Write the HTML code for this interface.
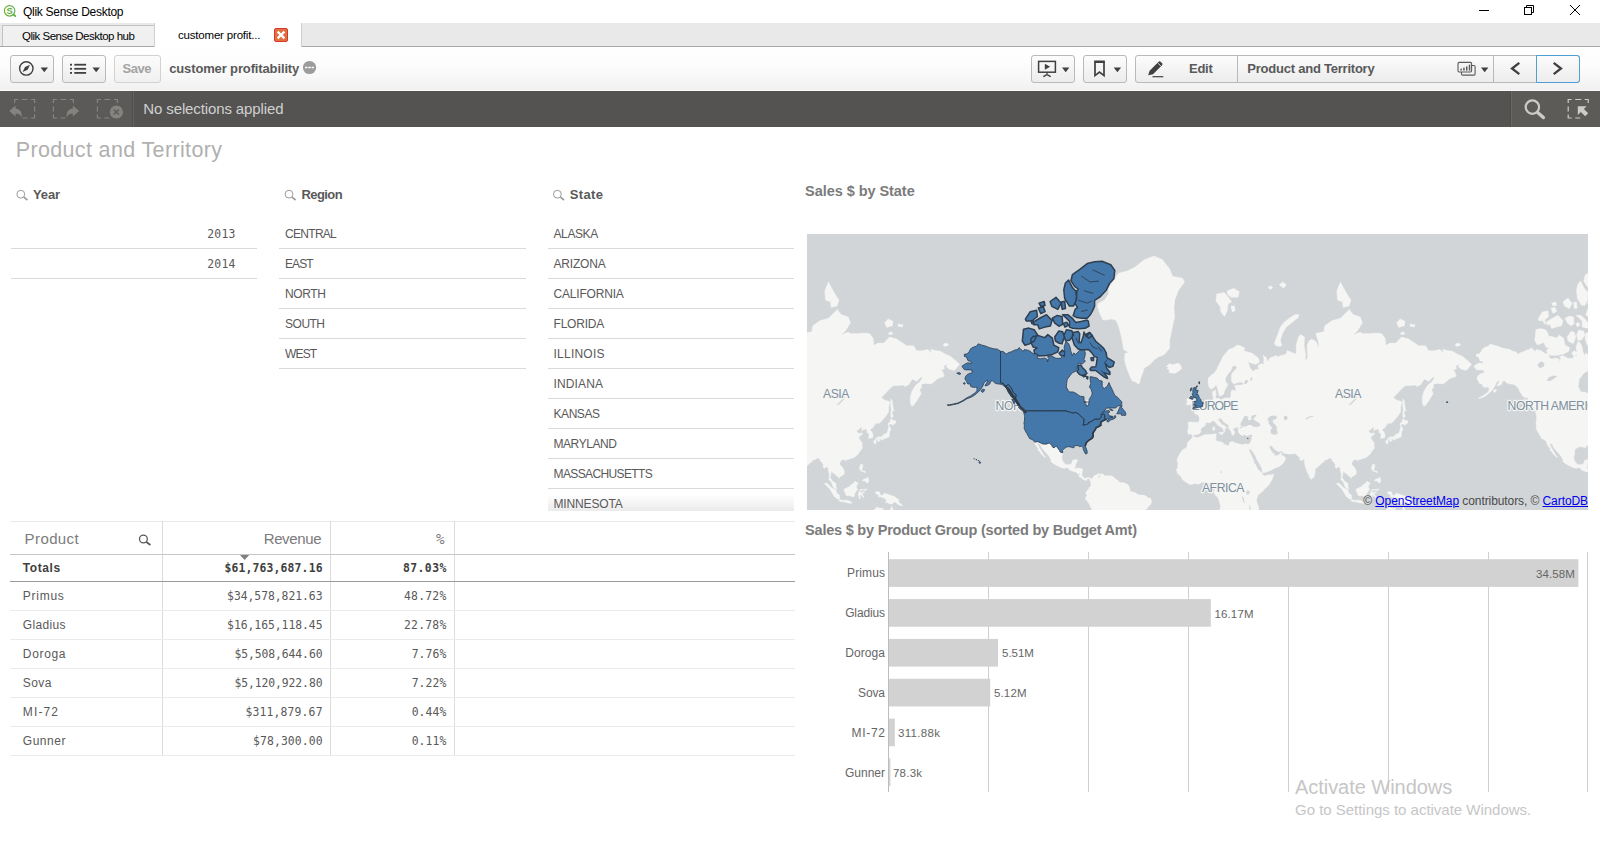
<!DOCTYPE html>
<html lang="en"><head><meta charset="utf-8"><title>Qlik Sense Desktop</title>
<style>
html,body{margin:0;padding:0;}
body{width:1600px;height:859px;position:relative;overflow:hidden;background:#fff;font-family:"Liberation Sans",sans-serif;}
.a{position:absolute;box-sizing:border-box;}
.t{position:absolute;white-space:nowrap;line-height:1em;font-family:"Liberation Sans",sans-serif;}
#tabstrip{left:0;top:23px;width:1600px;height:24px;background:#e9e9e9;border-bottom:1px solid #a9a9a9;}
#tab1{left:2px;top:25px;width:153px;height:21px;background:#f0f0f0;border:1px solid #c3c3c3;border-bottom:none;}
#tab2{left:154px;top:23px;width:148px;height:24px;background:#fff;border-left:1px solid #d0d0d0;border-right:1px solid #d0d0d0;}
#tabx{left:274px;top:28px;width:14px;height:14px;background:#e0703f;border:1px solid #d9362c;border-radius:2px;}
#toolbar{left:0;top:47px;width:1600px;height:44px;background:linear-gradient(#ffffff 0%,#fdfdfd 40%,#f1f1f1 100%);border-bottom:1px solid #f9f9f9;}
.btn{top:55px;height:28px;border:1px solid #b9b9b9;border-radius:3px;background:linear-gradient(#fcfcfc,#ececec);}
.btn.dis{border-color:#d2d2d2;background:linear-gradient(#fbfbfb,#f0f0f0);}
.sep{top:55px;width:1px;height:28px;background:#b9b9b9;}
#nextb{left:1536px;top:55px;width:44px;height:28px;border:1px solid #4d9fd6;border-radius:0 3px 3px 0;}
#selbar{left:0;top:91px;width:1600px;height:36px;background:#545351;}
#selL{left:0;top:91px;width:134px;height:36px;background:#5b5a58;border-right:1px solid #656462;}
#selR{left:1510px;top:91px;width:90px;height:36px;background:#5c5b58;border-left:1px solid #4b4a48;}
.hl{height:1px;background:#dadada;}
.vl{width:1px;background:#dcdcdc;}
#minn{left:548px;top:489px;width:246px;height:22px;background:linear-gradient(#ffffff 25%,#ebebeb 100%);}
.bar{background:#d2d2d2;height:27.5px;left:889px;}
.grid{width:1px;top:552px;height:240px;background:#cfcfcf;}
#map{left:807px;top:234px;width:781px;height:276px;background:#d1d5d8;overflow:hidden;}
#icons{left:0;top:0;}
a{color:#0000ee;}
.attr{position:absolute;right:0;bottom:0;font-size:12px;line-height:14px;color:#4a4a4a;white-space:nowrap;padding:0 0 2px 0;letter-spacing:-0.08px;}
.lk{color:#0000ee;text-decoration:underline;}

#selL2{left:132px;top:91px;width:1px;height:36px;background:#4e4d4c;}
#selR2{left:1511px;top:91px;width:1px;height:36px;background:#696866;}

</style></head>
<body>
<div class="a" id="tabstrip"></div>
<div class="a" id="tab1"></div>
<div class="a" id="tab2"></div>
<div class="a" id="tabx"></div>
<div class="a" id="toolbar"></div>
<div class="a btn" style="left:10px;width:44px;"></div>
<div class="a btn" style="left:62px;width:44px;"></div>
<div class="a btn dis" style="left:114px;width:47px;"></div>
<div class="a btn" style="left:1031px;width:44px;"></div>
<div class="a btn" style="left:1083px;width:44px;"></div>
<div class="a btn" style="left:1135px;width:445px;"></div>
<div class="a sep" style="left:1237px;"></div>
<div class="a sep" style="left:1493px;"></div>
<div class="a" id="nextb"></div>
<div class="a" id="selbar"></div>
<div class="a" id="selL"></div>
<div class="a" id="selR"></div>
<div class="a" id="selL2"></div>
<div class="a" id="selR2"></div>

<!-- filter pane lines -->
<div class="a hl" style="left:11px;width:246px;top:248px;"></div>
<div class="a hl" style="left:11px;width:246px;top:278px;"></div>
<div class="a hl" style="left:279px;width:247px;top:248px;"></div>
<div class="a hl" style="left:279px;width:247px;top:278px;"></div>
<div class="a hl" style="left:279px;width:247px;top:308px;"></div>
<div class="a hl" style="left:279px;width:247px;top:338px;"></div>
<div class="a hl" style="left:279px;width:247px;top:368px;"></div>
<div class="a hl" style="left:548px;width:246px;top:248px;"></div>
<div class="a hl" style="left:548px;width:246px;top:278px;"></div>
<div class="a hl" style="left:548px;width:246px;top:308px;"></div>
<div class="a hl" style="left:548px;width:246px;top:338px;"></div>
<div class="a hl" style="left:548px;width:246px;top:368px;"></div>
<div class="a hl" style="left:548px;width:246px;top:398px;"></div>
<div class="a hl" style="left:548px;width:246px;top:428px;"></div>
<div class="a hl" style="left:548px;width:246px;top:458px;"></div>
<div class="a hl" style="left:548px;width:246px;top:488px;"></div>
<div class="a" id="minn"></div>

<!-- table lines -->
<div class="a hl" style="left:10px;width:785px;top:521px;background:#ebebeb;"></div>
<div class="a vl" style="left:162px;top:521px;height:234px;"></div>
<div class="a vl" style="left:330px;top:521px;height:234px;"></div>
<div class="a vl" style="left:454px;top:521px;height:234px;"></div>
<div class="a hl" style="left:10px;width:785px;top:554px;background:#c6c6c6;"></div>
<div class="a hl" style="left:10px;width:785px;top:581px;background:#9b9b9b;"></div>
<div class="a hl" style="left:10px;width:785px;top:610px;background:#ebebeb;"></div>
<div class="a hl" style="left:10px;width:785px;top:639px;background:#ebebeb;"></div>
<div class="a hl" style="left:10px;width:785px;top:668px;background:#ebebeb;"></div>
<div class="a hl" style="left:10px;width:785px;top:697px;background:#ebebeb;"></div>
<div class="a hl" style="left:10px;width:785px;top:726px;background:#ebebeb;"></div>
<div class="a hl" style="left:10px;width:785px;top:755px;background:#ebebeb;"></div>

<!-- map -->
<div class="a" id="map"><svg width="781" height="276" viewBox="807 234 781 276" style="position:absolute;left:0;top:0;display:block">
<rect x="807" y="234" width="781" height="276" fill="#d1d5d8"/>
<path fill="#f5f5f3" stroke="#f5f5f3" stroke-width="0.4" stroke-linejoin="round" d="M676.3 434.3L675.5 431.2L676.5 427.0L675.8 423.1L677.6 421.8L681.2 422.2L684.0 422.2L686.4 422.4L687.3 420.0L687.3 417.2L685.9 414.9L682.6 413.4L682.2 412.1L684.7 411.3L686.7 411.5L686.6 409.3L689.1 409.7L691.1 408.2L691.4 406.6L693.7 405.5L695.1 403.7L695.8 401.8L698.7 400.6L701.1 399.9L701.2 396.9L700.5 394.4L700.7 391.6L704.1 390.0L703.6 393.2L704.4 394.4L703.2 396.9L704.6 398.4L706.8 398.4L709.2 399.6L712.5 398.2L715.5 397.7L717.3 398.4L718.9 396.2L718.9 392.4L719.6 390.5L721.1 390.0L723.6 391.3L723.7 388.1L722.4 385.9L724.6 385.1L728.8 385.1L732.0 384.0L729.5 382.0L726.0 382.5L721.7 384.0L719.6 381.4L719.3 377.8L719.6 374.1L723.8 368.9L725.1 368.2L723.4 365.5L720.3 366.5L719.3 369.9L716.0 374.1L713.6 377.8L713.5 381.7L715.9 384.3L715.0 386.5L712.6 390.5L711.8 393.9L709.3 395.7L707.3 395.9L706.8 393.7L705.8 390.0L704.9 386.5L704.1 385.1L702.5 387.0L699.2 389.2L697.0 387.0L696.1 382.5L696.1 378.1L699.0 375.4L702.5 372.8L704.6 369.6L706.8 364.8L709.3 360.1L711.0 356.4L714.3 352.4L716.7 349.6L721.0 347.9L725.6 344.9L729.5 346.2L733.1 348.3L731.7 350.8L735.9 352.0L740.2 353.2L746.6 358.3L747.6 362.0L743.8 364.5L738.5 363.0L735.9 361.6L738.2 368.2L741.3 371.5L743.0 369.6L746.6 369.6L745.9 365.5L749.4 363.4L751.6 364.8L751.9 358.3L750.9 355.2L754.4 357.5L755.1 361.6L758.7 357.5L764.4 355.6L765.8 356.8L770.1 355.2L774.3 354.0L775.0 350.4L780.0 352.4L784.0 354.0L784.3 351.6L784.1 345.3L786.4 337.1L788.6 334.6L792.5 337.1L792.1 345.3L793.8 355.6L792.8 361.2L795.7 357.5L795.0 345.3L797.1 340.8L799.9 339.0L804.2 341.8L807.0 348.3L806.3 341.8L803.8 333.6L812.0 331.6L812.7 325.8L819.8 320.7L828.4 318.3L837.3 309.5L841.2 314.6L848.3 317.1L850.4 323.0L845.4 331.1L841.2 335.1L848.3 332.1L850.4 333.6L856.8 333.6L864.6 333.1L869.6 333.6L873.2 338.5L873.9 345.3L878.2 343.1L883.8 343.1L888.1 338.5L889.5 337.1L896.6 339.0L902.3 342.7L906.6 345.8L913.7 345.8L916.6 350.8L922.2 350.8L927.9 349.6L931.5 353.2L930.8 349.2L935.0 350.4L940.7 351.2L945.0 354.0L950.7 356.4L956.4 361.2L959.6 364.5L955.7 368.9L954.2 370.6L948.6 368.9L946.4 366.5L947.1 363.8L943.6 366.2L945.0 368.2L942.9 369.6L941.4 369.2L944.0 374.7L944.3 376.3L937.9 378.4L933.6 382.3L931.2 384.0L925.8 383.4L921.5 384.0L921.1 387.9L919.7 389.7L921.1 393.9L919.1 396.9L916.6 401.1L914.3 404.4L911.9 406.6L910.4 403.0L910.3 396.9L912.0 391.1L915.8 385.1L919.4 382.3L921.8 379.3L922.2 376.6L918.7 379.0L917.0 381.4L912.3 379.0L908.7 384.8L904.5 386.5L903.5 385.1L900.2 385.4L893.1 385.7L888.8 389.7L885.3 393.4L881.3 397.4L884.3 399.9L888.5 401.3L890.0 401.8L888.8 406.4L888.5 411.9L886.0 416.1L882.4 420.2L878.9 423.5L876.6 422.9L874.9 424.5L873.5 426.2L873.5 427.3L870.3 429.4L870.3 430.3L871.6 431.6L873.0 434.3L873.0 436.9L872.6 437.6L870.3 438.3L868.6 438.7L868.9 436.1L869.1 433.4L867.1 432.9L866.8 429.8L865.9 429.0L863.2 429.8L861.5 431.0L862.2 427.7L861.1 427.2L859.0 429.2L856.5 430.7L858.0 432.7L858.2 433.8L860.7 432.9L863.2 433.6L860.1 436.1L858.7 437.8L860.1 439.9L862.2 443.3L862.4 444.8L861.1 445.6L862.5 446.4L861.9 449.0L859.7 451.6L858.7 453.5L856.8 455.2L855.0 456.9L851.4 458.5L848.3 459.4L846.0 460.0L845.7 461.5L845.0 459.7L843.0 459.5L840.9 460.7L839.5 463.5L840.6 465.6L842.9 467.8L844.3 471.2L844.4 473.8L842.3 475.8L840.9 476.1L838.8 478.6L838.2 476.7L836.2 475.8L835.1 474.1L832.6 472.8L832.5 471.6L831.2 471.9L830.9 474.5L830.1 477.4L831.6 479.6L832.6 481.2L834.5 482.2L836.1 484.2L836.1 486.7L837.2 489.0L836.1 489.0L833.1 486.9L831.8 483.6L830.7 481.2L828.8 479.6L829.2 476.7L829.2 473.8L828.4 470.9L828.0 467.9L826.7 466.8L824.5 468.2L823.1 467.6L823.4 465.0L822.1 462.7L820.3 460.7L819.6 458.5L817.7 458.1L815.3 459.4L812.7 460.0L812.4 461.5L810.6 462.6L808.5 464.5L806.0 466.8L804.5 467.9L803.1 469.0L803.2 472.1L802.5 474.1L802.5 476.3L801.4 477.7L800.2 478.4L799.2 479.4L797.8 478.1L796.8 475.0L795.4 472.4L794.2 469.4L793.2 466.5L792.5 463.5L792.4 460.4L792.1 458.6L790.0 460.7L789.1 460.7L787.1 458.5L788.6 457.4L786.0 456.4L784.3 454.6L783.6 453.6L780.7 453.9L777.2 454.1L774.3 453.8L771.5 453.3L770.1 451.4L769.1 450.9L766.5 451.7L763.7 450.3L761.5 448.2L761.2 447.9L760.1 446.1L758.4 445.7L757.3 446.2L758.0 448.7L759.7 451.4L760.4 452.4L761.2 454.6L761.8 452.5L762.4 454.3L762.2 455.4L764.4 455.7L766.5 455.2L768.6 452.7L769.2 452.2L769.5 455.0L772.3 456.4L774.0 458.1L772.2 461.4L771.1 463.5L769.1 465.1L767.2 466.5L763.2 467.9L758.7 470.4L753.0 472.6L750.9 472.8L750.2 470.9L749.7 467.9L747.6 464.2L744.8 459.7L743.5 456.1L741.3 452.7L738.8 449.5L738.8 447.1L737.8 449.7L736.2 448.7L735.4 446.4L734.9 444.3L737.6 444.1L738.6 441.6L739.5 439.7L739.9 436.9L740.5 435.0L738.2 434.6L735.2 435.9L732.7 434.6L730.5 435.5L727.8 434.3L726.4 432.0L726.1 429.8L726.3 428.8L726.3 428.3L726.0 427.2L723.7 427.2L723.1 428.5L721.6 427.9L721.1 429.8L722.1 430.7L723.1 432.3L723.1 433.0L722.0 432.7L721.9 435.2L720.9 435.4L719.9 434.6L719.0 432.9L719.6 432.0L718.4 430.9L717.4 429.4L716.6 427.7L716.6 425.4L715.3 424.3L713.2 423.1L711.0 421.2L709.6 418.6L708.3 419.2L708.5 417.8L706.5 418.6L706.6 420.8L708.3 422.2L710.3 425.1L712.0 425.3L715.3 428.6L713.2 427.9L712.6 429.4L713.3 430.7L711.9 432.7L711.3 432.6L711.8 431.0L710.8 428.8L709.2 427.3L706.8 426.0L704.8 424.3L703.5 422.2L701.7 420.4L699.7 421.6L697.8 422.9L695.4 422.4L693.4 423.1L693.6 425.1L692.1 426.4L690.0 427.3L688.6 429.8L689.1 431.2L687.9 433.2L685.9 434.6L682.7 434.8L681.0 436.1L680.0 435.0L678.8 433.9ZM825.5 300.3L824.8 290.8L828.4 282.0L834.1 292.5L839.0 300.3L836.9 306.0L831.2 307.4L830.5 301.8ZM884.6 323.0L888.1 318.9L893.1 321.3L892.4 325.8L886.7 327.4ZM898.1 324.1L903.0 324.7L902.3 326.9L898.1 326.3ZM888.1 333.6L891.0 331.6L893.1 334.1L889.5 334.6ZM942.9 345.3L945.0 343.1L948.6 344.0L947.8 345.8L944.3 346.2ZM891.0 398.7L892.4 401.1L892.8 405.3L893.5 410.2L894.8 410.8L892.4 410.8L892.1 414.0L893.1 415.5L892.9 417.2L891.0 417.2L890.8 414.0L891.1 409.7L890.7 405.3L890.8 401.1ZM888.1 426.0L888.5 422.7L890.0 422.5L890.7 418.4L893.1 420.6L895.6 420.8L896.1 422.5L893.1 425.1L890.2 423.9L889.2 424.1L889.5 425.6ZM889.4 426.0L890.2 427.9L891.0 429.8L889.5 432.0L889.4 434.5L889.2 436.6L887.8 437.8L887.5 437.3L886.4 438.3L885.6 438.5L883.8 438.5L883.6 439.0L882.1 440.4L881.1 439.0L881.6 438.5L878.2 439.0L877.0 439.7L875.3 439.5L875.2 439.5L876.0 438.5L877.7 437.1L880.3 436.8L882.1 436.8L883.4 434.6L884.3 433.4L884.3 434.5L886.0 433.8L887.3 432.1L888.1 429.2L888.1 427.7ZM875.2 439.7L876.3 440.7L876.0 443.1L874.9 444.4L874.2 442.8L873.5 441.2L874.3 440.2ZM877.4 439.7L880.4 439.2L879.9 440.7L878.2 441.6L877.3 440.6ZM860.5 464.2L862.8 464.4L862.8 467.2L861.8 469.4L862.5 470.7L865.2 471.2L865.4 472.9L863.9 471.9L861.8 471.3L860.5 470.6L860.0 469.7L859.4 467.6L860.2 465.7ZM867.5 477.0L868.9 479.6L868.5 481.7L867.5 483.0L865.4 481.7L865.4 480.6L862.5 481.2L863.2 479.6L864.6 478.7L866.1 478.7ZM844.0 488.9L845.9 488.6L847.3 487.4L849.7 486.4L851.1 484.6L852.6 483.9L854.3 482.2L855.1 481.0L856.4 482.0L858.5 483.5L856.8 484.9L856.4 486.7L856.8 488.3L858.2 489.6L856.5 490.1L856.1 492.1L854.7 493.1L854.4 495.7L854.0 496.7L852.0 496.7L849.7 495.6L847.9 496.0L845.7 495.1L845.4 492.8L844.0 491.0ZM824.5 483.0L827.7 483.6L829.4 485.6L831.8 487.9L833.6 488.6L836.2 490.3L836.6 492.4L837.6 493.8L839.8 495.3L839.6 499.3L837.8 499.3L834.5 496.7L831.8 492.4L829.5 488.6L827.2 486.4L824.7 483.9ZM838.6 500.7L840.9 499.5L843.3 500.6L846.6 500.1L849.3 500.8L849.4 501.3L851.7 502.1L851.7 503.4L848.3 503.0L844.0 502.1L840.3 501.6ZM859.0 498.8L860.2 498.8L860.1 495.3L861.1 494.8L863.1 497.4L863.6 497.4L863.9 496.7L862.1 493.8L861.5 493.7L864.5 492.4L864.4 491.9L861.8 492.3L860.0 492.3L860.0 490.4L861.1 490.3L863.9 490.3L866.1 490.4L867.1 488.9L865.8 489.3L863.2 489.6L860.9 489.2L859.7 490.0L859.4 491.1L858.7 492.7L858.0 495.0L859.0 496.0ZM875.3 492.1L877.4 491.6L879.6 492.1L880.3 494.6L881.7 495.7L883.8 493.8L885.3 493.3L889.5 494.7L894.5 496.4L896.4 498.1L898.8 499.5L899.2 500.6L898.1 500.7L899.8 503.1L903.0 505.7L900.9 505.7L898.1 504.6L895.2 502.1L893.1 502.8L892.4 504.1L889.5 504.0L887.4 502.6L885.3 502.8L886.4 500.7L885.3 498.8L881.7 497.3L878.9 496.7L877.9 496.7L879.2 495.3L877.9 495.0L876.7 494.1L875.3 493.0ZM873.2 520.0L873.6 512.3L874.2 509.6L875.3 508.5L877.6 507.0L878.9 507.9L881.0 508.2L883.6 508.5L882.4 510.4L881.7 512.3L883.8 513.8L887.4 516.3L889.2 516.3L890.4 512.6L890.5 508.9L891.7 506.3L893.1 509.4L893.2 511.6L895.6 512.6L896.6 517.8L897.4 520.0ZM1034.5 442.1L1035.2 444.6L1036.3 446.2L1037.7 447.9L1038.6 449.5L1037.4 449.8L1039.6 451.6L1041.4 454.3L1043.8 456.6L1044.7 457.5L1045.4 456.8L1044.1 455.5L1042.7 453.0L1041.0 450.3L1039.6 447.9L1037.9 444.6L1037.7 443.3L1040.3 444.3L1041.0 446.4L1043.1 449.5L1045.3 451.9L1047.4 454.3L1049.5 456.9L1051.0 459.7L1051.0 461.4L1052.7 463.3L1055.9 465.1L1058.8 466.5L1061.6 467.8L1064.5 468.4L1066.6 467.6L1068.7 468.8L1069.9 470.2L1071.6 471.0L1073.7 471.8L1076.1 472.1L1076.8 473.1L1078.7 474.7L1079.1 476.7L1080.5 477.3L1082.1 478.7L1083.1 479.4L1085.1 480.2L1086.7 480.6L1087.2 479.2L1087.9 478.3L1089.5 479.2L1090.2 480.7L1091.1 478.9L1090.9 478.6L1089.4 477.6L1087.8 477.3L1085.8 478.4L1084.1 478.1L1083.0 476.7L1082.1 475.4L1082.0 473.1L1082.5 470.9L1082.7 469.4L1080.8 468.2L1078.7 468.1L1076.6 468.2L1075.0 468.2L1074.6 468.1L1075.4 466.5L1075.7 464.4L1076.6 462.7L1077.6 460.1L1075.8 459.5L1072.6 460.3L1072.0 462.4L1070.9 464.2L1068.7 464.4L1066.6 464.7L1064.8 463.8L1064.2 463.0L1062.8 460.9L1062.0 458.9L1061.9 456.6L1062.5 454.3L1062.8 452.8L1060.1 452.0L1059.5 450.3L1058.4 449.0L1056.8 446.6L1055.4 446.6L1054.2 447.9L1052.4 446.9L1051.8 445.3L1049.5 443.3L1047.1 443.3L1047.1 444.1L1043.1 444.1L1037.9 441.7ZM1090.2 480.7L1090.9 482.5L1090.8 485.3L1091.2 485.6L1089.1 487.4L1088.9 489.0L1087.2 489.9L1087.1 491.0L1085.9 492.4L1085.9 494.1L1087.2 494.7L1086.8 495.8L1085.4 497.5L1085.7 499.5L1087.5 501.3L1089.2 503.9L1091.2 508.2L1092.5 510.8L1094.3 513.3L1094.3 520.0L1145.5 520.0L1145.5 513.3L1145.5 509.6L1146.2 509.5L1148.4 506.7L1150.9 503.9L1151.5 501.3L1150.8 498.4L1148.4 497.8L1146.2 496.3L1144.1 495.0L1141.3 495.0L1138.0 494.6L1135.6 492.7L1132.7 492.0L1129.9 491.0L1129.9 488.4L1128.5 485.3L1127.0 484.0L1124.2 482.7L1119.9 482.5L1117.8 480.6L1115.7 478.9L1113.5 477.0L1112.1 476.0L1110.0 475.8L1107.1 475.8L1104.3 475.8L1103.9 474.8L1101.4 473.5L1099.3 475.4L1099.6 473.2L1099.0 473.2L1097.2 474.5L1095.0 475.3L1093.6 476.1L1092.9 477.7L1091.8 478.7L1091.1 478.9ZM1138.6 384.3L1135.6 382.0L1132.0 380.8L1129.9 376.3L1127.8 370.9L1125.6 364.8L1124.6 359.4L1124.9 353.6L1128.5 352.4L1123.5 349.6L1123.1 346.2L1122.1 340.8L1120.6 333.6L1118.5 325.8L1115.7 320.1L1111.4 318.9L1106.4 320.1L1102.9 320.1L1100.0 314.0L1097.2 306.0L1098.6 303.2L1104.3 300.3L1108.6 294.1L1108.6 288.3L1112.8 282.0L1118.5 273.2L1127.0 271.1L1135.6 266.7L1144.1 259.7L1154.1 256.0L1162.6 259.7L1169.7 268.9L1172.6 276.2L1182.5 278.2L1184.6 282.0L1178.2 290.8L1174.7 300.3L1174.0 308.8L1174.7 317.1L1172.6 325.8L1171.1 333.6L1169.7 339.9L1169.7 345.3L1169.7 348.3L1166.9 351.6L1164.0 354.8L1158.3 357.1L1154.1 360.1L1150.5 364.1L1147.7 365.9L1144.1 368.2L1142.7 373.2L1140.6 378.4L1139.8 382.3ZM1166.2 366.5L1169.7 363.4L1172.6 364.8L1175.4 364.1L1178.2 363.0L1180.4 364.8L1181.8 368.2L1179.7 370.6L1175.4 373.2L1171.8 373.2L1168.7 372.2L1169.7 370.2L1166.9 368.6L1169.0 367.2ZM1192.5 403.7L1189.6 404.8L1186.8 405.0L1186.2 403.7L1187.5 402.5L1186.8 400.6L1186.8 398.9L1188.9 398.4L1188.8 396.9L1190.5 396.2L1192.3 396.4L1193.2 398.2L1192.3 400.1L1192.3 402.0ZM1188.3 434.3L1187.5 431.2L1188.5 427.0L1187.8 423.1L1189.6 421.8L1193.2 422.2L1196.0 422.2L1198.4 422.4L1199.3 420.0L1199.3 417.2L1197.9 414.9L1194.6 413.4L1194.2 412.1L1196.7 411.3L1198.7 411.5L1198.6 409.3L1201.1 409.7L1203.1 408.2L1203.4 406.6L1205.7 405.5L1207.1 403.7L1207.8 401.8L1210.7 400.6L1213.1 399.9L1213.2 396.9L1212.5 394.4L1212.7 391.6L1216.1 390.0L1215.6 393.2L1216.4 394.4L1215.2 396.9L1216.6 398.4L1218.8 398.4L1221.2 399.6L1224.5 398.2L1227.5 397.7L1229.3 398.4L1230.9 396.2L1230.9 392.4L1231.6 390.5L1233.1 390.0L1235.6 391.3L1235.7 388.1L1234.4 385.9L1236.6 385.1L1240.8 385.1L1244.0 384.0L1241.5 382.0L1238.0 382.5L1233.7 384.0L1231.6 381.4L1231.3 377.8L1231.6 374.1L1235.8 368.9L1237.1 368.2L1235.4 365.5L1232.3 366.5L1231.3 369.9L1228.0 374.1L1225.6 377.8L1225.5 381.7L1227.9 384.3L1227.0 386.5L1224.6 390.5L1223.8 393.9L1221.3 395.7L1219.3 395.9L1218.8 393.7L1217.8 390.0L1216.9 386.5L1216.1 385.1L1214.5 387.0L1211.2 389.2L1209.0 387.0L1208.1 382.5L1208.1 378.1L1211.0 375.4L1214.5 372.8L1216.6 369.6L1218.8 364.8L1221.3 360.1L1223.0 356.4L1226.3 352.4L1228.7 349.6L1233.0 347.9L1237.6 344.9L1241.5 346.2L1245.1 348.3L1243.7 350.8L1247.9 352.0L1252.2 353.2L1258.6 358.3L1259.6 362.0L1255.8 364.5L1250.5 363.0L1247.9 361.6L1250.2 368.2L1253.3 371.5L1255.0 369.6L1258.6 369.6L1257.9 365.5L1261.4 363.4L1263.6 364.8L1263.9 358.3L1262.9 355.2L1266.4 357.5L1267.1 361.6L1270.7 357.5L1276.4 355.6L1277.8 356.8L1282.1 355.2L1286.3 354.0L1287.0 350.4L1292.0 352.4L1296.0 354.0L1296.3 351.6L1296.1 345.3L1298.4 337.1L1300.6 334.6L1304.5 337.1L1304.1 345.3L1305.8 355.6L1304.8 361.2L1307.7 357.5L1307.0 345.3L1309.1 340.8L1311.9 339.0L1316.2 341.8L1319.0 348.3L1318.3 341.8L1315.8 333.6L1324.0 331.6L1324.7 325.8L1331.8 320.7L1340.4 318.3L1349.3 309.5L1353.2 314.6L1360.3 317.1L1362.4 323.0L1357.4 331.1L1353.2 335.1L1360.3 332.1L1362.4 333.6L1368.8 333.6L1376.6 333.1L1381.6 333.6L1385.2 338.5L1385.9 345.3L1390.2 343.1L1395.8 343.1L1400.1 338.5L1401.5 337.1L1408.6 339.0L1414.3 342.7L1418.6 345.8L1425.7 345.8L1428.6 350.8L1434.2 350.8L1439.9 349.6L1443.5 353.2L1442.8 349.2L1447.0 350.4L1452.7 351.2L1457.0 354.0L1462.7 356.4L1468.4 361.2L1471.6 364.5L1467.7 368.9L1466.2 370.6L1460.6 368.9L1458.4 366.5L1459.1 363.8L1455.6 366.2L1457.0 368.2L1454.9 369.6L1453.4 369.2L1456.0 374.7L1456.3 376.3L1449.9 378.4L1445.6 382.3L1443.2 384.0L1437.8 383.4L1433.5 384.0L1433.1 387.9L1431.7 389.7L1433.1 393.9L1431.1 396.9L1428.6 401.1L1426.3 404.4L1423.9 406.6L1422.4 403.0L1422.3 396.9L1424.0 391.1L1427.8 385.1L1431.4 382.3L1433.8 379.3L1434.2 376.6L1430.7 379.0L1429.0 381.4L1424.3 379.0L1420.7 384.8L1416.5 386.5L1415.5 385.1L1412.2 385.4L1405.1 385.7L1400.8 389.7L1397.3 393.4L1393.3 397.4L1396.3 399.9L1400.5 401.3L1402.0 401.8L1400.8 406.4L1400.5 411.9L1398.0 416.1L1394.4 420.2L1390.9 423.5L1388.6 422.9L1386.9 424.5L1385.5 426.2L1385.5 427.3L1382.3 429.4L1382.3 430.3L1383.6 431.6L1385.0 434.3L1385.0 436.9L1384.6 437.6L1382.3 438.3L1380.6 438.7L1380.9 436.1L1381.1 433.4L1379.1 432.9L1378.8 429.8L1377.9 429.0L1375.2 429.8L1373.5 431.0L1374.2 427.7L1373.1 427.2L1371.0 429.2L1368.5 430.7L1370.0 432.7L1370.2 433.8L1372.7 432.9L1375.2 433.6L1372.1 436.1L1370.7 437.8L1372.1 439.9L1374.2 443.3L1374.4 444.8L1373.1 445.6L1374.5 446.4L1373.9 449.0L1371.7 451.6L1370.7 453.5L1368.8 455.2L1367.0 456.9L1363.4 458.5L1360.3 459.4L1358.0 460.0L1357.7 461.5L1357.0 459.7L1355.0 459.5L1352.9 460.7L1351.5 463.5L1352.6 465.6L1354.9 467.8L1356.3 471.2L1356.4 473.8L1354.3 475.8L1352.9 476.1L1350.8 478.6L1350.2 476.7L1348.2 475.8L1347.1 474.1L1344.6 472.8L1344.5 471.6L1343.2 471.9L1342.9 474.5L1342.1 477.4L1343.6 479.6L1344.6 481.2L1346.5 482.2L1348.1 484.2L1348.1 486.7L1349.2 489.0L1348.1 489.0L1345.1 486.9L1343.8 483.6L1342.7 481.2L1340.8 479.6L1341.2 476.7L1341.2 473.8L1340.4 470.9L1340.0 467.9L1338.7 466.8L1336.5 468.2L1335.1 467.6L1335.4 465.0L1334.1 462.7L1332.3 460.7L1331.6 458.5L1329.7 458.1L1327.3 459.4L1324.7 460.0L1324.4 461.5L1322.6 462.6L1320.5 464.5L1318.0 466.8L1316.5 467.9L1315.1 469.0L1315.2 472.1L1314.5 474.1L1314.5 476.3L1313.4 477.7L1312.2 478.4L1311.2 479.4L1309.8 478.1L1308.8 475.0L1307.4 472.4L1306.2 469.4L1305.2 466.5L1304.5 463.5L1304.4 460.4L1304.1 458.6L1302.0 460.7L1301.1 460.7L1299.1 458.5L1300.6 457.4L1298.0 456.4L1296.3 454.6L1295.6 453.6L1292.7 453.9L1289.2 454.1L1286.3 453.8L1283.5 453.3L1282.1 451.4L1281.1 450.9L1278.5 451.7L1275.7 450.3L1273.5 448.2L1273.2 447.9L1272.1 446.1L1270.4 445.7L1269.3 446.2L1270.0 448.7L1271.7 451.4L1272.4 452.4L1273.2 454.6L1273.8 452.5L1274.4 454.3L1274.2 455.4L1276.4 455.7L1278.5 455.2L1280.6 452.7L1281.2 452.2L1281.5 455.0L1284.3 456.4L1286.0 458.1L1284.2 461.4L1283.1 463.5L1281.1 465.1L1279.2 466.5L1275.2 467.9L1270.7 470.4L1265.0 472.6L1262.9 472.8L1262.2 470.9L1261.7 467.9L1259.6 464.2L1256.8 459.7L1255.5 456.1L1253.3 452.7L1250.8 449.5L1250.8 447.1L1249.8 449.7L1248.2 448.7L1247.4 446.4L1246.9 444.3L1249.6 444.1L1250.6 441.6L1251.5 439.7L1251.9 436.9L1252.5 435.0L1250.2 434.6L1247.2 435.9L1244.7 434.6L1242.5 435.5L1239.8 434.3L1238.4 432.0L1238.1 429.8L1238.3 428.8L1238.3 428.3L1238.0 427.2L1235.7 427.2L1235.1 428.5L1233.6 427.9L1233.1 429.8L1234.1 430.7L1235.1 432.3L1235.1 433.0L1234.0 432.7L1233.9 435.2L1232.9 435.4L1231.9 434.6L1231.0 432.9L1231.6 432.0L1230.4 430.9L1229.4 429.4L1228.6 427.7L1228.6 425.4L1227.3 424.3L1225.2 423.1L1223.0 421.2L1221.6 418.6L1220.3 419.2L1220.5 417.8L1218.5 418.6L1218.6 420.8L1220.3 422.2L1222.3 425.1L1224.0 425.3L1227.3 428.6L1225.2 427.9L1224.6 429.4L1225.3 430.7L1223.9 432.7L1223.3 432.6L1223.8 431.0L1222.8 428.8L1221.2 427.3L1218.8 426.0L1216.8 424.3L1215.5 422.2L1213.7 420.4L1211.7 421.6L1209.8 422.9L1207.4 422.4L1205.4 423.1L1205.6 425.1L1204.1 426.4L1202.0 427.3L1200.6 429.8L1201.1 431.2L1199.9 433.2L1197.9 434.6L1194.7 434.8L1193.0 436.1L1192.0 435.0L1190.8 433.9ZM1247.4 446.4L1249.1 450.3L1251.5 455.8L1253.9 460.4L1253.9 462.6L1255.9 465.0L1257.2 468.5L1260.0 471.2L1262.4 473.1L1262.6 474.4L1264.3 476.1L1267.8 475.0L1270.7 474.8L1273.8 474.0L1273.2 476.7L1271.8 479.9L1269.3 484.6L1266.4 487.6L1265.4 488.2L1262.9 491.0L1260.2 493.4L1258.2 495.0L1257.5 496.8L1256.2 500.3L1256.9 500.7L1257.2 503.9L1258.5 506.0L1258.7 508.9L1258.7 512.6L1258.6 520.0L1218.1 520.0L1218.4 513.3L1218.8 510.4L1220.2 508.6L1220.6 506.3L1219.8 503.6L1219.2 501.0L1218.5 499.5L1217.8 497.5L1215.9 495.7L1214.5 493.8L1213.5 492.0L1214.4 490.3L1214.8 487.7L1214.8 485.6L1213.2 484.5L1211.0 484.7L1209.5 484.9L1208.1 483.0L1205.8 481.9L1202.7 482.3L1200.7 483.0L1198.2 484.2L1195.3 483.6L1190.3 484.7L1187.8 483.3L1185.6 482.0L1183.2 480.3L1182.2 478.9L1181.5 477.4L1179.7 475.3L1177.2 473.2L1177.1 471.6L1176.1 469.9L1177.5 467.9L1177.8 465.0L1178.0 462.7L1176.8 460.6L1178.2 456.6L1180.4 452.7L1182.5 449.8L1184.6 448.7L1186.8 447.1L1187.2 445.4L1187.1 443.8L1188.9 440.7L1190.2 440.2L1192.0 437.8L1192.6 436.4L1193.5 436.2L1195.3 437.5L1196.9 437.3L1198.2 437.5L1200.1 436.6L1201.0 436.2L1205.3 434.6L1208.1 434.6L1212.1 434.3L1214.9 433.8L1216.6 434.1L1215.9 435.7L1216.4 438.1L1215.4 439.5L1216.6 440.9L1218.8 441.4L1219.8 441.4L1222.8 442.4L1223.8 444.3L1225.9 444.8L1228.3 445.7L1229.4 444.6L1229.4 442.6L1231.9 441.4L1233.1 441.6L1234.0 442.4L1235.1 442.8L1236.6 443.3L1239.4 444.1L1242.2 444.8L1243.7 444.3L1245.1 443.8L1246.9 444.3ZM1215.9 301.0L1216.6 294.1L1223.8 292.5L1226.6 294.9L1231.6 301.8L1228.0 303.9L1227.3 310.8L1224.5 316.5L1220.9 312.1L1220.2 306.7ZM1227.3 290.8L1233.7 288.3L1239.4 291.7L1238.0 297.3L1230.9 297.3L1227.3 294.1ZM1230.9 306.0L1234.4 306.0L1235.1 310.8L1232.3 312.1ZM1274.5 342.7L1276.1 338.5L1278.2 333.1L1280.4 326.9L1283.9 322.4L1289.2 318.3L1294.9 314.6L1298.8 314.6L1298.1 317.7L1292.0 322.4L1286.3 326.9L1282.5 333.6L1280.4 339.9L1281.8 345.8L1279.2 346.6L1275.4 345.3ZM1267.8 287.4L1270.7 285.7L1272.8 287.4L1270.7 289.6ZM1279.2 284.8L1282.8 282.0L1286.3 284.8L1283.5 288.3ZM1337.5 300.3L1336.8 290.8L1340.4 282.0L1346.1 292.5L1351.0 300.3L1348.9 306.0L1343.2 307.4L1342.5 301.8ZM1396.6 323.0L1400.1 318.9L1405.1 321.3L1404.4 325.8L1398.7 327.4ZM1410.1 324.1L1415.0 324.7L1414.3 326.9L1410.1 326.3ZM1400.1 333.6L1403.0 331.6L1405.1 334.1L1401.5 334.6ZM1454.9 345.3L1457.0 343.1L1460.6 344.0L1459.8 345.8L1456.3 346.2ZM1403.0 398.7L1404.4 401.1L1404.8 405.3L1405.5 410.2L1406.8 410.8L1404.4 410.8L1404.1 414.0L1405.1 415.5L1404.9 417.2L1403.0 417.2L1402.8 414.0L1403.1 409.7L1402.7 405.3L1402.8 401.1ZM1400.1 426.0L1400.5 422.7L1402.0 422.5L1402.7 418.4L1405.1 420.6L1407.6 420.8L1408.1 422.5L1405.1 425.1L1402.2 423.9L1401.2 424.1L1401.5 425.6ZM1401.4 426.0L1402.2 427.9L1403.0 429.8L1401.5 432.0L1401.4 434.5L1401.2 436.6L1399.8 437.8L1399.5 437.3L1398.4 438.3L1397.6 438.5L1395.8 438.5L1395.6 439.0L1394.1 440.4L1393.1 439.0L1393.6 438.5L1390.2 439.0L1389.0 439.7L1387.3 439.5L1387.2 439.5L1388.0 438.5L1389.7 437.1L1392.3 436.8L1394.1 436.8L1395.4 434.6L1396.3 433.4L1396.3 434.5L1398.0 433.8L1399.3 432.1L1400.1 429.2L1400.1 427.7ZM1387.2 439.7L1388.3 440.7L1388.0 443.1L1386.9 444.4L1386.2 442.8L1385.5 441.2L1386.3 440.2ZM1389.4 439.7L1392.4 439.2L1391.9 440.7L1390.2 441.6L1389.3 440.6ZM1372.5 464.2L1374.8 464.4L1374.8 467.2L1373.8 469.4L1374.5 470.7L1377.2 471.2L1377.4 472.9L1375.9 471.9L1373.8 471.3L1372.5 470.6L1372.0 469.7L1371.4 467.6L1372.2 465.7ZM1379.5 477.0L1380.9 479.6L1380.5 481.7L1379.5 483.0L1377.4 481.7L1377.4 480.6L1374.5 481.2L1375.2 479.6L1376.6 478.7L1378.1 478.7ZM1356.0 488.9L1357.9 488.6L1359.3 487.4L1361.7 486.4L1363.1 484.6L1364.6 483.9L1366.3 482.2L1367.1 481.0L1368.4 482.0L1370.5 483.5L1368.8 484.9L1368.4 486.7L1368.8 488.3L1370.2 489.6L1368.5 490.1L1368.1 492.1L1366.7 493.1L1366.4 495.7L1366.0 496.7L1364.0 496.7L1361.7 495.6L1359.9 496.0L1357.7 495.1L1357.4 492.8L1356.0 491.0ZM1336.5 483.0L1339.7 483.6L1341.4 485.6L1343.8 487.9L1345.6 488.6L1348.2 490.3L1348.6 492.4L1349.6 493.8L1351.8 495.3L1351.6 499.3L1349.8 499.3L1346.5 496.7L1343.8 492.4L1341.5 488.6L1339.2 486.4L1336.7 483.9ZM1350.6 500.7L1352.9 499.5L1355.3 500.6L1358.6 500.1L1361.3 500.8L1361.4 501.3L1363.7 502.1L1363.7 503.4L1360.3 503.0L1356.0 502.1L1352.3 501.6ZM1371.0 498.8L1372.2 498.8L1372.1 495.3L1373.1 494.8L1375.1 497.4L1375.6 497.4L1375.9 496.7L1374.1 493.8L1373.5 493.7L1376.5 492.4L1376.4 491.9L1373.8 492.3L1372.0 492.3L1372.0 490.4L1373.1 490.3L1375.9 490.3L1378.1 490.4L1379.1 488.9L1377.8 489.3L1375.2 489.6L1372.9 489.2L1371.7 490.0L1371.4 491.1L1370.7 492.7L1370.0 495.0L1371.0 496.0ZM1387.3 492.1L1389.4 491.6L1391.6 492.1L1392.3 494.6L1393.7 495.7L1395.8 493.8L1397.3 493.3L1401.5 494.7L1406.5 496.4L1408.4 498.1L1410.8 499.5L1411.2 500.6L1410.1 500.7L1411.8 503.1L1415.0 505.7L1412.9 505.7L1410.1 504.6L1407.2 502.1L1405.1 502.8L1404.4 504.1L1401.5 504.0L1399.4 502.6L1397.3 502.8L1398.4 500.7L1397.3 498.8L1393.7 497.3L1390.9 496.7L1389.9 496.7L1391.2 495.3L1389.9 495.0L1388.7 494.1L1387.3 493.0ZM1385.2 520.0L1385.6 512.3L1386.2 509.6L1387.3 508.5L1389.6 507.0L1390.9 507.9L1393.0 508.2L1395.6 508.5L1394.4 510.4L1393.7 512.3L1395.8 513.8L1399.4 516.3L1401.2 516.3L1402.4 512.6L1402.5 508.9L1403.7 506.3L1405.1 509.4L1405.2 511.6L1407.6 512.6L1408.6 517.8L1409.4 520.0ZM1218.8 432.5L1223.2 432.1L1222.5 434.8L1218.8 433.2ZM1212.7 427.2L1214.5 426.6L1214.8 429.8L1213.8 430.7L1212.9 430.3ZM1000.5 351.2L997.6 349.2L993.4 348.7L989.1 347.5L984.8 345.8L981.3 344.9L978.3 343.8L976.3 346.2L973.4 347.1L970.6 348.7L969.2 351.6L967.0 354.0L964.6 354.0L964.1 356.2L966.3 357.1L968.2 360.9L970.6 361.2L971.3 363.8L968.0 362.7L964.9 364.1L961.9 366.2L964.2 369.6L966.3 369.9L969.2 369.9L972.0 370.2L972.0 373.2L969.9 373.2L967.0 374.7L965.6 376.3L964.9 379.0L966.3 381.1L967.8 384.0L970.3 384.0L970.6 386.5L972.7 387.3L975.2 387.3L977.0 387.3L976.9 390.5L975.6 392.4L972.7 394.4L970.6 395.9L968.5 396.9L966.6 397.9L967.0 398.7L969.9 397.7L972.0 396.7L974.2 395.4L976.3 393.7L978.4 391.9L980.6 389.7L982.3 387.0L983.0 385.7L984.1 382.8L986.2 380.8L987.7 380.2L986.7 382.8L985.2 385.1L985.0 385.9L987.7 385.4L989.8 384.0L990.5 381.4L992.6 380.8L994.1 382.5L996.2 383.7L999.0 384.0L1001.9 384.5L1004.7 386.5L1006.9 389.2L1008.0 391.9L1009.7 394.4L1011.4 396.9L1013.3 397.7L1015.8 397.4L1016.1 394.7L1013.6 392.9L1011.3 388.1L1008.4 384.5L1005.4 386.8L1003.3 383.4L1000.5 382.8ZM981.1 391.1L982.7 389.2L984.5 389.5L984.1 391.3L982.3 392.4ZM1000.5 351.2L1003.3 351.6L1006.2 354.0L1009.0 352.4L1011.8 351.6L1014.7 350.0L1017.5 349.6L1019.0 347.5L1020.4 348.7L1023.2 351.6L1024.2 349.6L1028.9 350.4L1033.2 353.6L1037.4 354.0L1037.4 358.3L1040.3 358.7L1044.6 357.9L1047.4 359.4L1047.4 362.0L1048.8 358.3L1047.4 356.8L1051.0 355.6L1055.9 358.3L1060.9 358.3L1062.3 355.6L1064.5 356.8L1064.8 351.6L1064.0 347.5L1065.9 341.3L1068.7 343.6L1070.2 347.5L1070.9 351.2L1072.3 355.6L1073.7 352.9L1075.8 354.4L1079.4 350.4L1084.4 350.4L1085.4 352.9L1085.1 355.6L1084.0 359.4L1085.4 361.2L1082.2 364.1L1078.7 363.0L1077.3 367.2L1077.0 369.6L1075.8 371.2L1072.3 372.8L1070.2 375.4L1067.3 379.3L1066.6 383.7L1066.3 387.0L1069.0 391.9L1073.0 391.9L1075.8 393.2L1080.1 396.2L1084.0 396.7L1084.1 401.8L1085.8 404.6L1086.5 406.0L1088.6 405.3L1088.9 403.0L1089.2 399.4L1091.5 395.7L1092.2 393.2L1091.1 389.2L1089.4 387.0L1090.8 383.7L1090.1 379.3L1090.1 376.6L1093.6 377.2L1097.2 378.1L1099.3 380.5L1102.2 381.1L1102.2 386.5L1104.3 388.4L1107.1 386.5L1109.0 382.5L1110.0 385.1L1112.1 389.2L1113.5 392.4L1115.0 395.7L1117.8 397.4L1119.5 399.4L1121.8 401.8L1121.8 403.9L1120.2 405.5L1117.8 406.0L1115.7 408.0L1112.8 408.0L1109.3 408.0L1106.4 408.2L1105.0 410.2L1102.9 411.9L1100.7 414.5L1101.4 414.5L1103.6 412.1L1106.4 410.6L1109.3 410.8L1109.6 412.3L1107.8 413.0L1108.8 414.7L1109.3 416.5L1110.7 417.2L1113.1 417.6L1115.2 415.3L1116.0 417.2L1114.2 418.8L1110.7 420.0L1107.8 422.2L1106.8 421.2L1107.4 420.0L1109.3 418.6L1107.8 418.8L1107.1 418.8L1105.7 419.0L1105.7 419.4L1104.6 417.8L1104.6 414.9L1103.9 414.4L1102.6 414.1L1101.4 415.7L1101.0 417.4L1099.3 419.2L1094.8 419.2L1092.9 420.6L1092.2 421.0L1090.1 422.0L1088.5 422.5L1088.6 423.5L1085.8 424.7L1083.0 425.1L1083.7 423.1L1084.0 419.2L1082.2 417.2L1080.8 416.1L1078.7 414.0L1075.4 412.3L1073.7 413.0L1071.6 412.8L1068.7 411.7L1066.5 411.5L1065.7 410.0L1065.7 410.8L1044.6 410.8L1025.6 410.8L1023.9 408.6L1020.4 406.4L1019.0 403.7L1016.8 400.6L1015.7 398.4L1015.8 397.4L1016.1 394.7L1013.6 392.9L1011.3 388.1L1008.4 384.5L1005.4 386.8L1003.3 383.4L1000.5 382.8ZM1025.4 412.1L1022.5 411.0L1018.5 407.3L1019.7 406.6L1022.8 408.2L1024.8 410.2L1025.5 411.7ZM1014.0 403.7L1011.8 399.2L1013.7 399.4L1014.4 402.7ZM1116.7 413.8L1117.8 411.9L1119.2 408.6L1120.6 405.7L1122.1 405.0L1121.6 407.5L1123.5 409.7L1125.2 411.9L1126.0 414.0L1125.2 415.7L1123.5 415.3L1121.4 415.3L1121.4 413.8ZM1109.3 408.9L1112.1 409.5L1113.1 410.6L1110.7 410.2ZM1109.6 415.7L1111.4 416.1L1112.8 416.3L1111.7 417.2L1110.0 416.5ZM1107.1 378.1L1104.3 376.9L1099.3 373.2L1095.8 370.2L1090.8 370.2L1090.1 368.9L1091.5 366.9L1095.8 366.5L1096.5 363.0L1097.2 357.5L1094.3 356.4L1091.5 352.4L1088.6 349.6L1085.1 350.0L1080.8 349.6L1078.7 349.2L1075.1 345.3L1073.0 338.5L1073.7 333.1L1078.7 332.1L1080.4 334.6L1079.8 342.2L1081.5 343.1L1083.7 337.1L1084.4 332.6L1086.5 337.1L1090.1 333.1L1092.9 337.1L1095.8 341.8L1100.0 345.3L1103.6 348.7L1105.7 352.9L1106.4 357.5L1110.7 360.1L1113.5 362.0L1112.1 366.2L1108.6 367.2L1105.0 363.4L1106.4 368.2L1109.3 371.5L1109.3 374.1L1103.6 372.5L1106.4 376.0ZM1101.4 262.1L1110.0 265.6L1113.8 271.1L1112.8 279.2L1108.6 283.9L1105.7 290.0L1100.0 296.5L1094.3 300.3L1094.3 306.0L1092.2 310.8L1090.1 314.6L1087.2 317.7L1082.2 317.7L1077.3 317.1L1073.7 315.3L1075.8 308.8L1078.0 307.4L1075.4 303.2L1077.3 298.0L1076.4 292.5L1078.7 289.1L1075.1 286.5L1071.6 281.1L1073.0 275.2L1080.1 270.0L1087.2 264.5L1094.3 262.7ZM1068.7 281.1L1072.3 288.3L1076.1 292.5L1075.4 300.3L1073.0 305.3L1069.4 305.3L1065.2 298.0L1064.5 290.0L1065.9 283.9ZM1087.2 321.3L1087.9 325.8L1084.4 327.9L1078.7 328.5L1073.0 327.9L1070.2 326.9L1070.2 321.3L1067.3 318.3L1063.8 315.3L1068.7 315.3L1073.0 318.9L1075.8 322.4L1081.5 321.3L1085.8 320.1ZM1063.8 323.5L1066.6 322.4L1068.0 325.2L1065.2 326.9ZM1053.1 318.3L1057.4 315.9L1061.6 317.1L1062.0 324.1L1058.8 325.8L1055.2 323.0ZM1034.6 321.8L1040.3 318.3L1046.0 315.3L1051.0 320.7L1049.5 325.8L1044.6 326.9L1039.6 328.5L1038.2 324.7L1034.6 324.7ZM1026.1 318.9L1030.3 312.1L1036.0 310.8L1036.7 316.5L1031.8 320.7L1026.8 320.7ZM1022.8 340.8L1025.4 344.9L1029.6 343.6L1033.9 340.8L1036.7 334.6L1033.9 330.1L1028.9 328.5L1023.9 329.5ZM1031.8 342.7L1033.9 347.1L1037.4 347.9L1034.6 350.0L1035.3 353.6L1039.6 355.6L1046.0 355.2L1051.7 354.0L1056.6 351.6L1057.6 347.5L1053.1 345.3L1051.7 338.5L1047.4 335.1L1044.6 338.0L1038.9 336.1L1033.9 337.1L1031.8 339.4ZM1055.2 337.1L1058.8 331.6L1062.3 332.1L1063.8 337.1L1061.6 343.6L1058.8 342.7L1055.9 340.8ZM1064.5 335.1L1066.6 330.1L1071.6 331.1L1073.0 335.1L1069.4 339.9L1065.9 340.4ZM1059.5 353.2L1062.3 350.4L1065.2 352.9L1063.8 355.6L1060.9 355.2ZM1077.3 371.5L1079.4 374.1L1083.0 376.0L1086.5 373.2L1085.1 370.6L1082.2 367.6L1080.8 365.2L1078.0 366.2L1078.7 369.6ZM1083.0 375.0L1084.4 374.9L1085.8 376.0L1083.7 376.9ZM1086.8 376.6L1087.9 376.9L1087.6 379.0L1086.8 378.4ZM1090.8 357.9L1093.6 357.5L1093.6 360.5L1091.5 360.5ZM1084.4 401.5L1085.8 401.3L1086.4 402.3L1084.9 402.5ZM1051.0 301.8L1055.9 298.0L1060.2 303.2L1057.4 308.8L1052.4 306.0ZM1061.6 302.5L1064.5 301.8L1065.2 308.1L1062.3 308.8ZM1038.9 308.1L1043.1 307.4L1044.6 311.4L1041.0 313.4ZM1039.6 303.2L1043.8 301.8L1044.6 305.3L1041.0 306.0ZM1085.8 334.6L1089.4 332.6L1092.2 335.6L1088.6 338.0ZM1031.0 320.7L1033.2 320.4L1033.5 324.1L1031.8 323.5ZM1023.6 412.1L1025.6 412.3L1025.6 410.8L1044.6 410.8L1065.7 410.8L1065.7 410.0L1066.5 411.5L1068.7 411.7L1071.6 412.8L1073.7 413.0L1075.4 412.3L1078.7 414.0L1080.8 416.1L1082.2 417.2L1084.0 419.2L1083.7 423.1L1083.0 425.1L1085.8 424.7L1088.6 423.5L1088.5 422.5L1090.1 422.0L1092.2 421.0L1092.9 420.6L1094.8 419.2L1099.3 419.2L1101.0 417.4L1101.4 415.7L1102.6 414.1L1103.9 414.4L1104.6 414.9L1104.6 417.8L1105.7 419.4L1104.3 420.4L1102.9 421.2L1101.2 422.0L1100.4 422.9L1100.2 424.3L1100.6 425.2L1101.4 425.0L1101.4 425.6L1099.7 426.0L1098.7 426.4L1097.9 427.0L1098.6 427.0L1097.7 427.4L1095.8 427.9L1095.5 429.6L1094.5 430.7L1094.2 431.4L1094.0 432.1L1093.1 433.9L1092.9 434.5L1093.1 435.2L1093.6 437.3L1092.2 438.3L1090.2 439.7L1088.6 440.4L1087.4 441.7L1085.8 442.9L1085.2 445.1L1085.4 446.2L1086.4 448.8L1087.2 451.3L1087.1 453.0L1086.7 453.9L1085.5 453.9L1084.4 451.9L1083.4 449.7L1083.0 447.7L1081.5 446.1L1079.7 446.7L1078.0 445.6L1075.8 445.7L1073.6 445.9L1074.1 447.4L1073.9 447.9L1072.3 447.5L1070.2 446.9L1067.6 446.7L1065.9 447.5L1063.8 448.8L1062.5 450.6L1062.8 452.8L1060.1 452.0L1059.5 450.3L1058.4 449.0L1056.8 446.6L1055.4 446.6L1054.2 447.9L1052.4 446.9L1051.8 445.3L1049.5 443.3L1047.1 443.3L1047.1 444.1L1043.1 444.1L1037.9 441.7L1034.5 442.1L1034.2 441.4L1032.6 439.9L1031.5 439.4L1029.5 438.5L1028.5 436.6L1027.6 435.0L1026.8 433.4L1026.1 432.5L1024.9 430.1L1024.1 428.1L1024.4 425.4L1023.9 423.5L1024.5 420.2L1024.6 416.7L1024.5 415.7ZM1192.9 408.4L1196.0 408.0L1198.4 407.3L1201.4 406.9L1203.0 406.0L1202.3 405.3L1203.4 402.7L1201.4 401.8L1201.1 400.4L1200.7 399.2L1199.3 397.9L1198.7 395.7L1198.0 394.4L1196.3 394.4L1197.4 393.4L1198.2 390.5L1196.3 390.0L1195.3 390.3L1196.6 387.6L1193.9 387.6L1192.8 390.3L1192.9 392.6L1192.2 393.7L1193.0 396.2L1194.0 396.9L1193.7 397.7L1196.0 397.2L1196.2 398.9L1196.9 399.9L1196.6 401.1L1194.7 401.1L1194.5 402.3L1195.2 403.2L1193.6 404.4L1195.0 405.0L1196.7 405.7L1196.6 406.0L1194.9 406.2ZM1189.3 398.2L1190.6 396.4L1192.2 396.4L1193.2 397.9L1192.5 399.4L1191.0 398.9ZM1198.7 382.0L1199.7 381.7L1199.4 384.0L1198.9 383.7ZM1196.3 386.2L1197.3 385.7L1197.2 387.0L1196.4 386.9ZM1190.9 388.1L1192.2 387.9L1191.6 389.7L1190.5 391.3L1190.3 390.0ZM1546.5 442.1L1547.2 444.6L1548.3 446.2L1549.7 447.9L1550.6 449.5L1549.4 449.8L1551.6 451.6L1553.4 454.3L1555.8 456.6L1556.7 457.5L1557.4 456.8L1556.1 455.5L1554.7 453.0L1553.0 450.3L1551.6 447.9L1549.9 444.6L1549.7 443.3L1552.3 444.3L1553.0 446.4L1555.1 449.5L1557.3 451.9L1559.4 454.3L1561.5 456.9L1563.0 459.7L1563.0 461.4L1564.7 463.3L1567.9 465.1L1570.8 466.5L1573.6 467.8L1576.5 468.4L1578.6 467.6L1580.7 468.8L1581.9 470.2L1583.6 471.0L1585.7 471.8L1588.1 472.1L1588.8 473.1L1590.7 474.7L1591.1 476.7L1592.5 477.3L1594.1 478.7L1595.1 479.4L1597.1 480.2L1598.7 480.6L1599.2 479.2L1599.9 478.3L1601.5 479.2L1602.2 480.7L1603.1 478.9L1602.9 478.6L1601.4 477.6L1599.8 477.3L1597.8 478.4L1596.1 478.1L1595.0 476.7L1594.1 475.4L1594.0 473.1L1594.5 470.9L1594.7 469.4L1592.8 468.2L1590.7 468.1L1588.6 468.2L1587.0 468.2L1586.6 468.1L1587.4 466.5L1587.7 464.4L1588.6 462.7L1589.6 460.1L1587.8 459.5L1584.6 460.3L1584.0 462.4L1582.9 464.2L1580.7 464.4L1578.6 464.7L1576.8 463.8L1576.2 463.0L1574.8 460.9L1574.0 458.9L1573.9 456.6L1574.5 454.3L1574.8 452.8L1572.1 452.0L1571.5 450.3L1570.4 449.0L1568.8 446.6L1567.4 446.6L1566.2 447.9L1564.4 446.9L1563.8 445.3L1561.5 443.3L1559.1 443.3L1559.1 444.1L1555.1 444.1L1549.9 441.7ZM1512.5 351.2L1509.6 349.2L1505.4 348.7L1501.1 347.5L1496.8 345.8L1493.3 344.9L1490.3 343.8L1488.3 346.2L1485.4 347.1L1482.6 348.7L1481.2 351.6L1479.0 354.0L1476.6 354.0L1476.1 356.2L1478.3 357.1L1480.2 360.9L1482.6 361.2L1483.3 363.8L1480.0 362.7L1476.9 364.1L1473.9 366.2L1476.2 369.6L1478.3 369.9L1481.2 369.9L1484.0 370.2L1484.0 373.2L1481.9 373.2L1479.0 374.7L1477.6 376.3L1476.9 379.0L1478.3 381.1L1479.8 384.0L1482.3 384.0L1482.6 386.5L1484.7 387.3L1487.2 387.3L1489.0 387.3L1488.9 390.5L1487.6 392.4L1484.7 394.4L1482.6 395.9L1480.5 396.9L1478.6 397.9L1479.0 398.7L1481.9 397.7L1484.0 396.7L1486.2 395.4L1488.3 393.7L1490.4 391.9L1492.6 389.7L1494.3 387.0L1495.0 385.7L1496.1 382.8L1498.2 380.8L1499.7 380.2L1498.7 382.8L1497.2 385.1L1497.0 385.9L1499.7 385.4L1501.8 384.0L1502.5 381.4L1504.6 380.8L1506.1 382.5L1508.2 383.7L1511.0 384.0L1513.9 384.5L1516.7 386.5L1518.9 389.2L1520.0 391.9L1521.7 394.4L1523.4 396.9L1525.3 397.7L1527.8 397.4L1528.1 394.7L1525.6 392.9L1523.3 388.1L1520.4 384.5L1517.4 386.8L1515.3 383.4L1512.5 382.8ZM1493.1 391.1L1494.7 389.2L1496.5 389.5L1496.1 391.3L1494.3 392.4ZM1512.5 351.2L1515.3 351.6L1518.2 354.0L1521.0 352.4L1523.8 351.6L1526.7 350.0L1529.5 349.6L1531.0 347.5L1532.4 348.7L1535.2 351.6L1536.2 349.6L1540.9 350.4L1545.2 353.6L1549.4 354.0L1549.4 358.3L1552.3 358.7L1556.6 357.9L1559.4 359.4L1559.4 362.0L1560.8 358.3L1559.4 356.8L1563.0 355.6L1567.9 358.3L1572.9 358.3L1574.3 355.6L1576.5 356.8L1576.8 351.6L1576.0 347.5L1577.9 341.3L1580.7 343.6L1582.2 347.5L1582.9 351.2L1584.3 355.6L1585.7 352.9L1587.8 354.4L1591.4 350.4L1596.4 350.4L1597.4 352.9L1597.1 355.6L1596.0 359.4L1597.4 361.2L1594.2 364.1L1590.7 363.0L1589.3 367.2L1589.0 369.6L1587.8 371.2L1584.3 372.8L1582.2 375.4L1579.3 379.3L1578.6 383.7L1578.3 387.0L1581.0 391.9L1585.0 391.9L1587.8 393.2L1592.1 396.2L1596.0 396.7L1596.1 401.8L1597.8 404.6L1598.5 406.0L1600.6 405.3L1600.9 403.0L1601.2 399.4L1603.5 395.7L1604.2 393.2L1603.1 389.2L1601.4 387.0L1602.8 383.7L1602.1 379.3L1602.1 376.6L1605.6 377.2L1609.2 378.1L1611.3 380.5L1614.2 381.1L1614.2 386.5L1616.3 388.4L1619.1 386.5L1621.0 382.5L1622.0 385.1L1624.1 389.2L1625.5 392.4L1627.0 395.7L1629.8 397.4L1631.5 399.4L1633.8 401.8L1633.8 403.9L1632.2 405.5L1629.8 406.0L1627.7 408.0L1624.8 408.0L1621.3 408.0L1618.4 408.2L1617.0 410.2L1614.9 411.9L1612.7 414.5L1613.4 414.5L1615.6 412.1L1618.4 410.6L1621.3 410.8L1621.6 412.3L1619.8 413.0L1620.8 414.7L1621.3 416.5L1622.7 417.2L1625.1 417.6L1627.2 415.3L1628.0 417.2L1626.2 418.8L1622.7 420.0L1619.8 422.2L1618.8 421.2L1619.4 420.0L1621.3 418.6L1619.8 418.8L1619.1 418.8L1617.7 419.0L1617.7 419.4L1616.6 417.8L1616.6 414.9L1615.9 414.4L1614.6 414.1L1613.4 415.7L1613.0 417.4L1611.3 419.2L1606.8 419.2L1604.9 420.6L1604.2 421.0L1602.1 422.0L1600.5 422.5L1600.6 423.5L1597.8 424.7L1595.0 425.1L1595.7 423.1L1596.0 419.2L1594.2 417.2L1592.8 416.1L1590.7 414.0L1587.4 412.3L1585.7 413.0L1583.6 412.8L1580.7 411.7L1578.5 411.5L1577.7 410.0L1577.7 410.8L1556.6 410.8L1537.6 410.8L1535.9 408.6L1532.4 406.4L1531.0 403.7L1528.8 400.6L1527.7 398.4L1527.8 397.4L1528.1 394.7L1525.6 392.9L1523.3 388.1L1520.4 384.5L1517.4 386.8L1515.3 383.4L1512.5 382.8ZM1537.4 412.1L1534.5 411.0L1530.5 407.3L1531.7 406.6L1534.8 408.2L1536.8 410.2L1537.5 411.7ZM1526.0 403.7L1523.8 399.2L1525.7 399.4L1526.4 402.7ZM1619.1 378.1L1616.3 376.9L1611.3 373.2L1607.8 370.2L1602.8 370.2L1602.1 368.9L1603.5 366.9L1607.8 366.5L1608.5 363.0L1609.2 357.5L1606.3 356.4L1603.5 352.4L1600.6 349.6L1597.1 350.0L1592.8 349.6L1590.7 349.2L1587.1 345.3L1585.0 338.5L1585.7 333.1L1590.7 332.1L1592.4 334.6L1591.8 342.2L1593.5 343.1L1595.7 337.1L1596.4 332.6L1598.5 337.1L1602.1 333.1L1604.9 337.1L1607.8 341.8L1612.0 345.3L1615.6 348.7L1617.7 352.9L1618.4 357.5L1622.7 360.1L1625.5 362.0L1624.1 366.2L1620.6 367.2L1617.0 363.4L1618.4 368.2L1621.3 371.5L1621.3 374.1L1615.6 372.5L1618.4 376.0ZM1613.4 262.1L1622.0 265.6L1625.8 271.1L1624.8 279.2L1620.6 283.9L1617.7 290.0L1612.0 296.5L1606.3 300.3L1606.3 306.0L1604.2 310.8L1602.1 314.6L1599.2 317.7L1594.2 317.7L1589.3 317.1L1585.7 315.3L1587.8 308.8L1590.0 307.4L1587.4 303.2L1589.3 298.0L1588.4 292.5L1590.7 289.1L1587.1 286.5L1583.6 281.1L1585.0 275.2L1592.1 270.0L1599.2 264.5L1606.3 262.7ZM1580.7 281.1L1584.3 288.3L1588.1 292.5L1587.4 300.3L1585.0 305.3L1581.4 305.3L1577.2 298.0L1576.5 290.0L1577.9 283.9ZM1599.2 321.3L1599.9 325.8L1596.4 327.9L1590.7 328.5L1585.0 327.9L1582.2 326.9L1582.2 321.3L1579.3 318.3L1575.8 315.3L1580.7 315.3L1585.0 318.9L1587.8 322.4L1593.5 321.3L1597.8 320.1ZM1575.8 323.5L1578.6 322.4L1580.0 325.2L1577.2 326.9ZM1565.1 318.3L1569.4 315.9L1573.6 317.1L1574.0 324.1L1570.8 325.8L1567.2 323.0ZM1546.6 321.8L1552.3 318.3L1558.0 315.3L1563.0 320.7L1561.5 325.8L1556.6 326.9L1551.6 328.5L1550.2 324.7L1546.6 324.7ZM1538.1 318.9L1542.3 312.1L1548.0 310.8L1548.7 316.5L1543.8 320.7L1538.8 320.7ZM1534.8 340.8L1537.4 344.9L1541.6 343.6L1545.9 340.8L1548.7 334.6L1545.9 330.1L1540.9 328.5L1535.9 329.5ZM1543.8 342.7L1545.9 347.1L1549.4 347.9L1546.6 350.0L1547.3 353.6L1551.6 355.6L1558.0 355.2L1563.7 354.0L1568.6 351.6L1569.6 347.5L1565.1 345.3L1563.7 338.5L1559.4 335.1L1556.6 338.0L1550.9 336.1L1545.9 337.1L1543.8 339.4ZM1567.2 337.1L1570.8 331.6L1574.3 332.1L1575.8 337.1L1573.6 343.6L1570.8 342.7L1567.9 340.8ZM1576.5 335.1L1578.6 330.1L1583.6 331.1L1585.0 335.1L1581.4 339.9L1577.9 340.4ZM1571.5 353.2L1574.3 350.4L1577.2 352.9L1575.8 355.6L1572.9 355.2ZM1589.3 371.5L1591.4 374.1L1595.0 376.0L1598.5 373.2L1597.1 370.6L1594.2 367.6L1592.8 365.2L1590.0 366.2L1590.7 369.6ZM1563.0 301.8L1567.9 298.0L1572.2 303.2L1569.4 308.8L1564.4 306.0ZM1573.6 302.5L1576.5 301.8L1577.2 308.1L1574.3 308.8ZM1550.9 308.1L1555.1 307.4L1556.6 311.4L1553.0 313.4ZM1551.6 303.2L1555.8 301.8L1556.6 305.3L1553.0 306.0ZM1543.0 320.7L1545.2 320.4L1545.5 324.1L1543.8 323.5ZM1535.6 412.1L1537.6 412.3L1537.6 410.8L1556.6 410.8L1577.7 410.8L1577.7 410.0L1578.5 411.5L1580.7 411.7L1583.6 412.8L1585.7 413.0L1587.4 412.3L1590.7 414.0L1592.8 416.1L1594.2 417.2L1596.0 419.2L1595.7 423.1L1595.0 425.1L1597.8 424.7L1600.6 423.5L1600.5 422.5L1602.1 422.0L1604.2 421.0L1604.9 420.6L1606.8 419.2L1611.3 419.2L1613.0 417.4L1613.4 415.7L1614.6 414.1L1615.9 414.4L1616.6 414.9L1616.6 417.8L1617.7 419.4L1616.3 420.4L1614.9 421.2L1613.2 422.0L1612.4 422.9L1612.2 424.3L1612.6 425.2L1613.4 425.0L1613.4 425.6L1611.7 426.0L1610.7 426.4L1609.9 427.0L1610.6 427.0L1609.7 427.4L1607.8 427.9L1607.5 429.6L1606.5 430.7L1606.2 431.4L1606.0 432.1L1605.1 433.9L1604.9 434.5L1605.1 435.2L1605.6 437.3L1604.2 438.3L1602.2 439.7L1600.6 440.4L1599.4 441.7L1597.8 442.9L1597.2 445.1L1597.4 446.2L1598.4 448.8L1599.2 451.3L1599.1 453.0L1598.7 453.9L1597.5 453.9L1596.4 451.9L1595.4 449.7L1595.0 447.7L1593.5 446.1L1591.7 446.7L1590.0 445.6L1587.8 445.7L1585.6 445.9L1586.1 447.4L1585.9 447.9L1584.3 447.5L1582.2 446.9L1579.6 446.7L1577.9 447.5L1575.8 448.8L1574.5 450.6L1574.8 452.8L1572.1 452.0L1571.5 450.3L1570.4 449.0L1568.8 446.6L1567.4 446.6L1566.2 447.9L1564.4 446.9L1563.8 445.3L1561.5 443.3L1559.1 443.3L1559.1 444.1L1555.1 444.1L1549.9 441.7L1546.5 442.1L1546.2 441.4L1544.6 439.9L1543.5 439.4L1541.5 438.5L1540.5 436.6L1539.6 435.0L1538.8 433.4L1538.1 432.5L1536.9 430.1L1536.1 428.1L1536.4 425.4L1535.9 423.5L1536.5 420.2L1536.6 416.7L1536.5 415.7Z"/>
<path fill="#d1d5d8" d="M836.6 405.0L838.3 405.0L841.2 402.3L844.0 399.4L845.3 395.2L844.3 395.2L842.6 398.9L839.8 401.8ZM1240.8 426.0L1242.2 426.6L1245.8 426.6L1248.6 425.1L1250.8 425.1L1253.6 426.8L1257.5 427.0L1260.2 425.8L1260.0 423.7L1257.5 422.0L1255.0 420.4L1253.6 419.2L1253.1 418.6L1251.5 419.2L1249.4 420.4L1248.6 420.0L1247.4 418.4L1248.8 417.2L1246.5 416.1L1244.8 416.1L1243.2 418.2L1241.8 421.2L1240.7 423.1L1240.4 424.1ZM1250.8 418.0L1251.2 416.5L1253.6 415.1L1254.3 415.1L1256.8 414.7L1255.8 416.1L1255.0 417.2L1254.0 418.4L1253.1 418.4L1251.5 418.6ZM1267.8 418.2L1270.7 416.1L1274.2 415.5L1276.4 416.1L1276.7 418.6L1273.8 420.0L1272.5 420.2L1273.2 423.1L1275.7 425.1L1276.1 427.0L1277.8 426.4L1276.4 428.8L1277.1 430.3L1277.7 433.8L1276.4 434.5L1273.5 434.8L1271.4 433.6L1270.7 433.4L1270.5 431.0L1271.1 429.2L1272.4 428.1L1271.4 427.0L1269.6 424.5L1268.6 423.1L1268.6 421.2L1267.4 419.6ZM1239.1 427.9L1240.8 427.0L1243.0 427.3L1242.2 428.1L1240.1 428.3ZM1283.9 416.1L1286.3 415.7L1287.8 417.2L1287.0 419.6L1284.9 420.6L1283.9 418.8ZM1348.6 405.0L1350.3 405.0L1353.2 402.3L1356.0 399.4L1357.3 395.2L1356.3 395.2L1354.6 398.9L1351.8 401.8ZM1305.5 418.8L1307.0 417.6L1310.5 416.1L1313.4 415.9L1313.1 416.7L1310.5 416.9L1307.7 418.8L1306.2 419.4ZM1246.2 491.7L1247.2 490.6L1249.4 490.7L1249.6 492.4L1248.6 494.6L1246.5 494.6ZM1244.0 383.7L1245.1 380.2L1247.6 379.9L1247.9 382.3L1245.8 384.0ZM1250.1 380.8L1251.1 376.9L1252.6 377.8L1251.5 380.8ZM1242.5 495.8L1243.4 497.4L1244.8 502.8L1244.2 503.3L1242.5 499.5L1242.2 497.0ZM1249.4 504.6L1250.2 506.0L1250.8 508.9L1251.1 511.6L1250.2 511.4L1249.5 508.2L1249.2 505.3ZM1220.2 471.6L1221.6 471.3L1222.0 472.5L1220.9 472.9ZM1078.4 473.7L1079.8 474.1L1080.3 475.1L1079.1 474.8ZM1098.7 475.8L1099.7 475.8L1100.0 477.3L1099.0 478.0L1098.6 477.0ZM1537.4 364.8L1540.9 361.2L1544.5 363.0L1543.8 366.5L1539.5 368.2ZM1546.6 380.8L1548.7 377.2L1553.7 375.4L1557.3 376.0L1554.4 378.4L1550.2 381.1ZM1572.5 400.6L1573.9 399.6L1576.0 406.4L1575.2 407.8L1573.2 403.7Z"/>
<text x="1043.5" y="409.6" font-family="Liberation Sans, sans-serif" font-size="12.2" fill="#7d90a0" stroke="#f5f5f3" stroke-width="2.4" paint-order="stroke" stroke-linejoin="round" text-anchor="middle" letter-spacing="-0.42">NORTH AMERICA</text>
<text x="1214.5" y="409.6" font-family="Liberation Sans, sans-serif" font-size="12.2" fill="#7d90a0" stroke="#f5f5f3" stroke-width="2.4" paint-order="stroke" stroke-linejoin="round" text-anchor="middle" letter-spacing="-0.95">EUROPE</text>
<path fill="#4477aa" stroke="#2e3f52" stroke-width="1.5" stroke-linejoin="round" d="M1107.6 378.6L1104.7 377.3L1099.5 373.5L1095.8 370.5L1090.6 370.5L1089.9 369.2L1091.4 367.1L1095.8 366.8L1096.5 363.2L1097.3 357.6L1094.3 356.4L1091.4 352.4L1088.4 349.4L1084.7 349.8L1080.3 349.4L1078.1 349.0L1074.4 345.0L1072.1 338.0L1072.9 332.5L1078.1 331.5L1079.8 334.0L1079.2 341.8L1081.0 342.8L1083.2 336.6L1084.0 332.0L1086.2 336.6L1089.9 332.5L1092.8 336.6L1095.8 341.4L1100.2 345.0L1103.9 348.6L1106.2 352.8L1106.9 357.6L1111.3 360.2L1114.3 362.1L1112.8 366.4L1109.1 367.5L1105.4 363.6L1106.9 368.5L1109.9 371.9L1109.9 374.5L1103.9 372.9L1106.9 376.4ZM1102.0 261.2L1110.8 264.8L1114.8 270.5L1113.8 278.8L1109.4 283.6L1106.4 289.9L1100.5 296.5L1094.6 300.4L1094.6 306.3L1092.4 311.1L1090.1 315.1L1087.2 318.2L1082.0 318.2L1076.8 317.6L1073.1 315.7L1075.3 309.1L1077.6 307.7L1074.9 303.4L1076.8 298.1L1075.9 292.4L1078.3 289.0L1074.6 286.3L1070.9 280.7L1072.4 274.7L1079.8 269.4L1087.2 263.6L1094.6 261.8ZM1068.6 280.0L1072.6 287.8L1076.9 292.3L1076.1 300.7L1073.4 306.1L1069.4 306.1L1064.6 298.3L1063.8 289.7L1065.4 283.0ZM1088.3 321.2L1089.1 326.0L1085.2 328.3L1078.9 328.8L1072.7 328.3L1069.5 327.1L1069.5 321.2L1066.4 318.1L1062.5 314.8L1068.0 314.8L1072.7 318.7L1075.8 322.4L1082.1 321.2L1086.8 320.0ZM1063.3 323.4L1066.7 322.2L1068.4 325.3L1065.0 327.1ZM1052.3 318.1L1057.3 315.4L1062.2 316.8L1062.7 324.4L1058.9 326.2L1054.8 323.2ZM1033.7 321.8L1040.1 318.0L1046.5 314.7L1052.0 320.5L1050.4 326.0L1044.9 327.1L1039.3 328.9L1037.7 324.8L1033.7 324.8ZM1025.4 319.1L1030.2 311.7L1036.6 310.3L1037.4 316.5L1031.8 321.0L1026.2 321.0ZM1022.3 341.0L1025.0 345.3L1029.6 343.9L1034.2 341.0L1037.3 334.5L1034.2 329.7L1028.9 328.1L1023.5 329.2ZM1030.9 342.5L1033.2 347.1L1037.0 348.0L1034.0 350.2L1034.7 354.0L1039.3 356.1L1046.2 355.6L1052.4 354.4L1057.8 351.9L1058.8 347.6L1053.9 345.3L1052.4 338.1L1047.8 334.6L1044.7 337.6L1038.6 335.6L1033.2 336.6L1030.9 339.1ZM1054.7 337.0L1058.7 331.1L1062.7 331.7L1064.3 337.0L1061.9 343.9L1058.7 343.0L1055.5 341.0ZM1064.0 335.1L1066.4 329.7L1071.9 330.8L1073.5 335.1L1069.6 340.2L1065.6 340.7ZM1059.1 353.2L1062.3 350.1L1065.6 352.8L1064.0 355.8L1060.7 355.4ZM1077.0 371.6L1079.3 374.3L1083.1 376.2L1086.9 373.3L1085.4 370.6L1082.3 367.4L1080.8 364.9L1077.7 366.0L1078.5 369.5ZM1083.0 375.0L1084.4 374.9L1085.8 376.0L1083.7 376.9ZM1086.8 376.6L1087.9 376.9L1087.6 379.0L1086.8 378.4ZM1090.8 357.9L1093.6 357.5L1093.6 360.5L1091.5 360.5ZM1050.1 301.5L1056.0 297.3L1061.2 303.2L1057.8 309.4L1051.8 306.3ZM1061.3 302.1L1064.7 301.3L1065.5 308.4L1062.1 309.2ZM1038.3 307.9L1043.4 307.1L1045.1 311.6L1040.8 313.7ZM1039.0 303.1L1044.2 301.5L1045.0 305.5L1040.8 306.3ZM1085.5 334.6L1089.4 332.5L1092.5 335.6L1088.6 338.2ZM1031.0 320.7L1033.2 320.4L1033.5 324.1L1031.8 323.5Z"/>
<path fill="#4477aa" stroke="#2b3a4a" stroke-width="0.8" stroke-linejoin="round" d="M1000.5 351.2L997.6 349.2L993.4 348.7L989.1 347.5L984.8 345.8L981.3 344.9L978.3 343.8L976.3 346.2L973.4 347.1L970.6 348.7L969.2 351.6L967.0 354.0L964.6 354.0L964.1 356.2L966.3 357.1L968.2 360.9L970.6 361.2L971.3 363.8L968.0 362.7L964.9 364.1L961.9 366.2L964.2 369.6L966.3 369.9L969.2 369.9L972.0 370.2L972.0 373.2L969.9 373.2L967.0 374.7L965.6 376.3L964.9 379.0L966.3 381.1L967.8 384.0L970.3 384.0L970.6 386.5L972.7 387.3L975.2 387.3L977.0 387.3L976.9 390.5L975.6 392.4L972.7 394.4L970.6 395.9L968.5 396.9L966.6 397.9L964.2 399.6L961.4 401.3L957.8 403.0L953.5 403.9L949.3 404.8L947.1 405.0L949.3 405.5L953.5 404.6L957.8 403.7L961.4 402.0L964.2 400.6L967.0 398.7L969.9 397.7L972.0 396.7L974.2 395.4L976.3 393.7L978.4 391.9L980.6 389.7L982.3 387.0L983.0 385.7L984.1 382.8L986.2 380.8L987.7 380.2L986.7 382.8L985.2 385.1L985.0 385.9L987.7 385.4L989.8 384.0L990.5 381.4L992.6 380.8L994.1 382.5L996.2 383.7L999.0 384.0L1001.9 384.5L1004.7 386.5L1006.9 389.2L1008.0 391.9L1009.7 394.4L1011.4 396.9L1013.3 397.7L1015.8 397.4L1016.1 394.7L1013.6 392.9L1011.3 388.1L1008.4 384.5L1005.4 386.8L1003.3 383.4L1000.5 382.8ZM981.1 391.1L982.7 389.2L984.5 389.5L984.1 391.3L982.3 392.4ZM956.8 373.2L959.2 372.5L960.9 373.8L959.2 374.4ZM963.1 383.4L964.6 382.5L965.3 383.7L964.2 384.3ZM1446.3 402.0L1447.6 401.8L1447.9 402.3L1446.6 402.5ZM979.1 462.3L979.3 461.6L980.3 462.0L980.8 462.7L979.7 463.5L979.2 463.0ZM978.1 460.5L978.7 460.4L979.1 460.8L978.6 461.0ZM975.9 459.6L976.4 459.4L976.8 460.0L976.1 460.0ZM973.8 458.8L974.2 458.6L974.4 459.0L974.0 459.1ZM1000.5 351.2L1003.3 351.6L1006.2 354.0L1009.0 352.4L1011.8 351.6L1014.7 350.0L1017.5 349.6L1019.0 347.5L1020.4 348.7L1023.2 351.6L1024.2 349.6L1028.9 350.4L1033.2 353.6L1037.4 354.0L1037.4 358.3L1040.3 358.7L1044.6 357.9L1047.4 359.4L1047.4 362.0L1048.8 358.3L1047.4 356.8L1051.0 355.6L1055.9 358.3L1060.9 358.3L1062.3 355.6L1064.5 356.8L1064.8 351.6L1064.0 347.5L1065.9 341.3L1068.7 343.6L1070.2 347.5L1070.9 351.2L1072.3 355.6L1073.7 352.9L1075.8 354.4L1079.4 350.4L1084.4 350.4L1085.4 352.9L1085.1 355.6L1084.0 359.4L1085.4 361.2L1082.2 364.1L1078.7 363.0L1077.3 367.2L1077.0 369.6L1075.8 371.2L1072.3 372.8L1070.2 375.4L1067.3 379.3L1066.6 383.7L1066.3 387.0L1069.0 391.9L1073.0 391.9L1075.8 393.2L1080.1 396.2L1084.0 396.7L1084.1 401.8L1085.8 404.6L1086.5 406.0L1088.6 405.3L1088.9 403.0L1089.2 399.4L1091.5 395.7L1092.2 393.2L1091.1 389.2L1089.4 387.0L1090.8 383.7L1090.1 379.3L1090.1 376.6L1093.6 377.2L1097.2 378.1L1099.3 380.5L1102.2 381.1L1102.2 386.5L1104.3 388.4L1107.1 386.5L1109.0 382.5L1110.0 385.1L1112.1 389.2L1113.5 392.4L1115.0 395.7L1117.8 397.4L1119.5 399.4L1121.8 401.8L1121.8 403.9L1120.2 405.5L1117.8 406.0L1115.7 408.0L1112.8 408.0L1109.3 408.0L1106.4 408.2L1105.0 410.2L1102.9 411.9L1100.7 414.5L1101.4 414.5L1103.6 412.1L1106.4 410.6L1109.3 410.8L1109.6 412.3L1107.8 413.0L1108.8 414.7L1109.3 416.5L1110.7 417.2L1113.1 417.6L1115.2 415.3L1116.0 417.2L1114.2 418.8L1110.7 420.0L1107.8 422.2L1106.8 421.2L1107.4 420.0L1109.3 418.6L1107.8 418.8L1107.1 418.8L1105.7 419.0L1105.7 419.4L1104.6 417.8L1104.6 414.9L1103.9 414.4L1102.6 414.1L1101.4 415.7L1101.0 417.4L1099.3 419.2L1094.8 419.2L1092.9 420.6L1092.2 421.0L1090.1 422.0L1088.5 422.5L1088.6 423.5L1085.8 424.7L1083.0 425.1L1083.7 423.1L1084.0 419.2L1082.2 417.2L1080.8 416.1L1078.7 414.0L1075.4 412.3L1073.7 413.0L1071.6 412.8L1068.7 411.7L1066.5 411.5L1065.7 410.0L1065.7 410.8L1044.6 410.8L1025.6 410.8L1023.9 408.6L1020.4 406.4L1019.0 403.7L1016.8 400.6L1015.7 398.4L1015.8 397.4L1016.1 394.7L1013.6 392.9L1011.3 388.1L1008.4 384.5L1005.4 386.8L1003.3 383.4L1000.5 382.8ZM1025.4 412.1L1022.5 411.0L1018.5 407.3L1019.7 406.6L1022.8 408.2L1024.8 410.2L1025.5 411.7ZM1014.0 403.7L1011.8 399.2L1013.7 399.4L1014.4 402.7ZM1116.7 413.8L1117.8 411.9L1119.2 408.6L1120.6 405.7L1122.1 405.0L1121.6 407.5L1123.5 409.7L1125.2 411.9L1126.0 414.0L1125.2 415.7L1123.5 415.3L1121.4 415.3L1121.4 413.8ZM1109.3 408.9L1112.1 409.5L1113.1 410.6L1110.7 410.2ZM1109.6 415.7L1111.4 416.1L1112.8 416.3L1111.7 417.2L1110.0 416.5ZM1084.4 401.5L1085.8 401.3L1086.4 402.3L1084.9 402.5ZM1023.6 412.1L1025.6 412.3L1025.6 410.8L1044.6 410.8L1065.7 410.8L1065.7 410.0L1066.5 411.5L1068.7 411.7L1071.6 412.8L1073.7 413.0L1075.4 412.3L1078.7 414.0L1080.8 416.1L1082.2 417.2L1084.0 419.2L1083.7 423.1L1083.0 425.1L1085.8 424.7L1088.6 423.5L1088.5 422.5L1090.1 422.0L1092.2 421.0L1092.9 420.6L1094.8 419.2L1099.3 419.2L1101.0 417.4L1101.4 415.7L1102.6 414.1L1103.9 414.4L1104.6 414.9L1104.6 417.8L1105.7 419.4L1104.3 420.4L1102.9 421.2L1101.2 422.0L1100.4 422.9L1100.2 424.3L1100.6 425.2L1101.4 425.0L1101.4 425.6L1099.7 426.0L1098.7 426.4L1097.9 427.0L1098.6 427.0L1097.7 427.4L1095.8 427.9L1095.5 429.6L1094.5 430.7L1094.2 431.4L1094.0 432.1L1093.1 433.9L1092.9 434.5L1093.1 435.2L1093.6 437.3L1092.2 438.3L1090.2 439.7L1088.6 440.4L1087.4 441.7L1085.8 442.9L1085.2 445.1L1085.4 446.2L1086.4 448.8L1087.2 451.3L1087.1 453.0L1086.7 453.9L1085.5 453.9L1084.4 451.9L1083.4 449.7L1083.0 447.7L1081.5 446.1L1079.7 446.7L1078.0 445.6L1075.8 445.7L1073.6 445.9L1074.1 447.4L1073.9 447.9L1072.3 447.5L1070.2 446.9L1067.6 446.7L1065.9 447.5L1063.8 448.8L1062.5 450.6L1062.8 452.8L1060.1 452.0L1059.5 450.3L1058.4 449.0L1056.8 446.6L1055.4 446.6L1054.2 447.9L1052.4 446.9L1051.8 445.3L1049.5 443.3L1047.1 443.3L1047.1 444.1L1043.1 444.1L1037.9 441.7L1034.5 442.1L1034.2 441.4L1032.6 439.9L1031.5 439.4L1029.5 438.5L1028.5 436.6L1027.6 435.0L1026.8 433.4L1026.1 432.5L1024.9 430.1L1024.1 428.1L1024.4 425.4L1023.9 423.5L1024.5 420.2L1024.6 416.7L1024.5 415.7ZM1192.9 408.4L1196.0 408.0L1198.4 407.3L1201.4 406.9L1203.0 406.0L1202.3 405.3L1203.4 402.7L1201.4 401.8L1201.1 400.4L1200.7 399.2L1199.3 397.9L1198.7 395.7L1198.0 394.4L1196.3 394.4L1197.4 393.4L1198.2 390.5L1196.3 390.0L1195.3 390.3L1196.6 387.6L1193.9 387.6L1192.8 390.3L1192.9 392.6L1192.2 393.7L1193.0 396.2L1194.0 396.9L1193.7 397.7L1196.0 397.2L1196.2 398.9L1196.9 399.9L1196.6 401.1L1194.7 401.1L1194.5 402.3L1195.2 403.2L1193.6 404.4L1195.0 405.0L1196.7 405.7L1196.6 406.0L1194.9 406.2ZM1189.3 398.2L1190.6 396.4L1192.2 396.4L1193.2 397.9L1192.5 399.4L1191.0 398.9ZM1198.7 382.0L1199.7 381.7L1199.4 384.0L1198.9 383.7ZM1196.3 386.2L1197.3 385.7L1197.2 387.0L1196.4 386.9ZM1190.9 388.1L1192.2 387.9L1191.6 389.7L1190.5 391.3L1190.3 390.0ZM1247.6 438.3L1248.1 438.3L1248.1 438.6L1247.6 438.6Z"/>
<path fill="none" stroke="#2f3a46" stroke-width="1.5" stroke-linejoin="round" stroke-linecap="round" d="M1005.4 385.9L1007.9 388.7L1010.0 391.9L1012.1 395.4L1014.4 398.2L1016.4 401.3L1018.5 404.6L1021.4 408.2L1024.2 411.0L1025.8 412.6"/>
<path fill="none" stroke="#2f3a46" stroke-width="2.8" stroke-linejoin="round" stroke-linecap="round" d="M1007.9 388.7L1010.0 391.9L1012.1 395.4L1014.4 398.2L1016.4 401.3L1018.5 404.6"/>
<path fill="none" stroke="#2f3a46" stroke-width="1.7" stroke-linejoin="round" stroke-linecap="round" d="M1085.4 445.4L1086.4 442.6L1089.2 440.0L1092.1 438.3L1093.2 435.5L1092.8 432.9L1094.3 431.0L1095.5 429.2L1096.3 427.5L1099.7 426.0L1100.9 424.3L1101.0 422.0L1103.4 420.4L1106.0 419.4"/>
<path fill="none" stroke="#2e3f52" stroke-width="0.9" stroke-linecap="round" stroke-linejoin="round" d="M1081.5 276.2L1090.1 282.0L1098.6 281.1M1084.4 290.8L1092.9 293.3M1078.7 300.3L1087.2 303.2L1091.5 301.0M1081.5 311.4L1087.2 310.1M1092.9 270.0L1104.3 275.2M1098.6 347.1L1101.4 351.2M1090.1 342.7L1092.9 347.1L1097.2 348.7M1104.3 362.7L1107.1 359.8M1101.4 370.9L1105.7 374.1M1075.8 338.0L1078.7 343.6"/>
<text x="836" y="398" font-family="Liberation Sans, sans-serif" font-size="12.2" fill="#7d90a0" stroke="#f5f5f3" stroke-width="2.4" paint-order="stroke" stroke-linejoin="round" text-anchor="middle" letter-spacing="-0.42">ASIA</text>
<text x="1348" y="398" font-family="Liberation Sans, sans-serif" font-size="12.2" fill="#7d90a0" stroke="#f5f5f3" stroke-width="2.4" paint-order="stroke" stroke-linejoin="round" text-anchor="middle" letter-spacing="-0.42">ASIA</text>
<text x="1223" y="491.5" font-family="Liberation Sans, sans-serif" font-size="12.2" fill="#7d90a0" stroke="#f5f5f3" stroke-width="2.4" paint-order="stroke" stroke-linejoin="round" text-anchor="middle" letter-spacing="-0.42">AFRICA</text>
<text x="1555.5" y="409.6" font-family="Liberation Sans, sans-serif" font-size="12.2" fill="#7d90a0" stroke="#f5f5f3" stroke-width="2.4" paint-order="stroke" stroke-linejoin="round" text-anchor="middle" letter-spacing="-0.42">NORTH AMERICA</text>
</svg>
<div class="attr">© <span class="lk">OpenStreetMap</span> contributors, © <span class="lk">CartoDB</span></div></div>

<!-- bar chart -->
<div class="a grid" style="left:888px;background:#bdbdbd;"></div>
<div class="a grid" style="left:988px;"></div>
<div class="a grid" style="left:1088px;"></div>
<div class="a grid" style="left:1188px;"></div>
<div class="a grid" style="left:1288px;"></div>
<div class="a grid" style="left:1388px;"></div>
<div class="a grid" style="left:1488px;"></div>
<div class="a grid" style="left:1587px;"></div>

<svg class="a" id="icons" width="1600" height="859" viewBox="0 0 1600 859">
<!-- bars -->
<g fill="#d2d2d2">
  <rect x="889" y="559.20" width="689.4" height="27.7"/>
  <rect x="889" y="599.05" width="321.8" height="27.7"/>
  <rect x="889" y="638.90" width="109.0" height="27.7"/>
  <rect x="889" y="678.75" width="101.2" height="27.7"/>
  <rect x="889" y="718.60" width="5.8" height="27.7"/>
  <rect x="889" y="758.45" width="1.4" height="27.7"/>
</g>
<!-- Qlik logo -->
<circle cx="9.6" cy="10.8" r="5.25" fill="none" stroke="#62b03c" stroke-width="1.15"/>
<path d="M13.6 14.8L15.3 16" stroke="#62b03c" stroke-width="2" stroke-linecap="round" fill="none"/>
<text x="9.7" y="14.2" font-family="Liberation Sans, sans-serif" font-size="9.4" font-weight="700" fill="#62b03c" text-anchor="middle">S</text>
<!-- window controls -->
<g stroke="#000" stroke-width="1" fill="none">
  <path d="M1479 10.5H1489"/>
  <rect x="1524.5" y="7.5" width="7" height="7"/>
  <path d="M1526.5 7.5V5.5H1533.5V12.5H1531.5"/>
  <path d="M1570 5L1580 15 M1580 5L1570 15"/>
</g>
<!-- tab close x -->
<path d="M277.6 31.6L284.4 38.4 M284.4 31.6L277.6 38.4" stroke="#fff" stroke-width="2.2" fill="none"/>
<!-- compass -->
<circle cx="26.3" cy="68.4" r="6.7" fill="none" stroke="#404040" stroke-width="1.4"/>
<path d="M30 64.7L27.6 69.8L22.6 72.1L25 67Z" fill="#404040"/>
<path transform="translate(40.6 67.6)" d="M0 0H7.4L3.7 4.6Z" fill="#404040"/>
<!-- list -->
<g fill="#404040">
  <rect x="70" y="63.8" width="2" height="1.8"/><rect x="74.3" y="63.8" width="11.8" height="1.8"/>
  <rect x="70" y="67.9" width="2" height="1.8"/><rect x="74.3" y="67.9" width="11.8" height="1.8"/>
  <rect x="70" y="72" width="2" height="1.8"/><rect x="74.3" y="72" width="11.8" height="1.8"/>
</g>
<path transform="translate(92.5 67.6)" d="M0 0H7.4L3.7 4.6Z" fill="#404040"/>
<!-- title status circle -->
<circle cx="309.5" cy="67.5" r="6.6" fill="#9c9c9c"/>
<path d="M305 67.5H314" stroke="#fff" stroke-width="1.4" stroke-dasharray="2.4 0.9" fill="none"/>
<!-- presentation -->
<g stroke="#404040" fill="none">
  <rect x="1038.6" y="61.4" width="16.8" height="10.8" stroke-width="1.5"/>
  <path d="M1047 72.5V75 M1043.3 76.6L1047 74.6L1050.7 76.6" stroke-width="1.3"/>
</g>
<path d="M1044.8 63.8L1050.2 66.8L1044.8 69.8Z" fill="#404040"/>
<path transform="translate(1062 67.6)" d="M0 0H7.4L3.7 4.6Z" fill="#404040"/>
<!-- bookmark -->
<path d="M1095 62.2H1104V75.6L1099.5 72L1095 75.6Z" fill="none" stroke="#404040" stroke-width="1.7"/>
<path d="M1094.2 61.6H1104.8" stroke="#404040" stroke-width="2.2"/>
<path transform="translate(1113.7 67.6)" d="M0 0H7.4L3.7 4.6Z" fill="#404040"/>
<!-- pencil -->
<path d="M1148.2 75.2L1149.6 70.8L1158.6 61.8Q1159.6 60.8 1160.8 61.9L1162 63.1Q1163 64.2 1162 65.2L1153 74.2Z" fill="#404040"/>
<path d="M1158 63.2L1160.7 65.9" stroke="#f4f4f4" stroke-width="0.9"/>
<path d="M1152.5 76.7H1163.3" stroke="#404040" stroke-width="1.2"/>
<!-- sheets icon -->
<g fill="none" stroke="#595959" stroke-width="1.1">
  <rect x="1461.5" y="65.5" width="13.6" height="9.6" rx="1.2"/>
  <rect x="1458" y="62.4" width="13.6" height="9.6" rx="1.2" fill="#f4f4f4"/>
</g>
<g fill="#595959">
  <rect x="1460.4" y="68.6" width="1.5" height="2"/><rect x="1463.2" y="67.6" width="1.5" height="3"/>
  <rect x="1466" y="66.4" width="1.5" height="4.2"/><rect x="1468.8" y="64.6" width="1.5" height="6"/>
</g>
<path transform="translate(1481 67.6)" d="M0 0H7.4L3.7 4.6Z" fill="#404040"/>
<!-- chevrons -->
<path d="M1519.3 62.8L1512 68.5L1519.3 74.2" fill="none" stroke="#404040" stroke-width="2.3"/>
<path d="M1553.7 62.8L1561 68.5L1553.7 74.2" fill="none" stroke="#404040" stroke-width="2.3"/>
<!-- selection bar left icons -->
<g transform="translate(14.6 99.5)" fill="none" stroke-width="1.2" stroke="#84837f"><path d="M0 3.5V0H3.5 M7 0H13 M16.5 0H20V3.5 M20 7V12 M20 15V18.5H16.5 M13 18.5H8"/></g>
<path d="M9.2 111L15.6 105.6V108.8C19.6 108.8 22 111.4 21.8 117.6C20.6 114.6 18.8 113.4 15.6 113.4V116.4Z" fill="#84837f" stroke="#5b5a58" stroke-width="1.6" paint-order="stroke"/>
<g transform="translate(53.4 99.5)" fill="none" stroke-width="1.2" stroke="#84837f"><path d="M0 3.5V0H3.5 M7 0H13 M16.5 0H20V3.5 M3.5 18.5H0V15 M0 12V7 M7 18.5H12"/></g>
<path d="M79.2 111L72.8 105.6V108.8C68.8 108.8 66.4 111.4 66.6 117.6C67.8 114.6 69.6 113.4 72.8 113.4V116.4Z" fill="#84837f" stroke="#5b5a58" stroke-width="1.6" paint-order="stroke"/>
<g transform="translate(97.4 99.5)" fill="none" stroke-width="1.2" stroke="#84837f"><path d="M0 3.5V0H3.5 M7 0H13 M16.5 0H20V3.5 M3.5 18.5H0V15 M0 12V7 M7 18.5H12"/></g>
<circle cx="116.4" cy="112" r="6.6" fill="#84837f" stroke="#5b5a58" stroke-width="1.6" paint-order="stroke"/>
<path d="M113.8 109.4L119 114.6 M119 109.4L113.8 114.6" stroke="#5b5a58" stroke-width="1.4" fill="none"/>
<!-- selection bar right icons -->
<circle cx="1532.4" cy="107.1" r="6.7" fill="none" stroke="#cbcbc9" stroke-width="2.2"/>
<path d="M1537.6 112.4L1543.4 117.6" stroke="#cbcbc9" stroke-width="3.3" stroke-linecap="round" fill="none"/>
<g transform="translate(1568.2 99.5)" fill="none" stroke-width="1.2" stroke="#cbcbc9"><path d="M0 3.5V0H3.5 M7 0H13 M16.5 0H20V3.5 M3.5 18.5H0V15 M0 12V7 M7 18.5H12"/></g>
<path d="M1577.8 106.2L1586.6 106.2L1583.9 108.9L1588.2 113.2L1585.2 116.2L1580.9 111.9L1577.8 115Z" fill="#cbcbc9"/>
<!-- listbox search icons -->
<g transform="translate(16.2 189.8)" fill="none" stroke="#9a9a9a"><circle cx="4.6" cy="4.4" r="3.9" stroke-width="1"/>
    <path d="M7.6 7.4L11.2 10.2" stroke-width="1.6"/></g>
<g transform="translate(284.4 189.8)" fill="none" stroke="#9a9a9a"><circle cx="4.6" cy="4.4" r="3.9" stroke-width="1"/>
    <path d="M7.6 7.4L11.2 10.2" stroke-width="1.6"/></g>
<g transform="translate(552.8 189.8)" fill="none" stroke="#9a9a9a"><circle cx="4.6" cy="4.4" r="3.9" stroke-width="1"/>
    <path d="M7.6 7.4L11.2 10.2" stroke-width="1.6"/></g>
<!-- table header search -->
<circle cx="143.4" cy="539" r="3.9" fill="none" stroke="#595959" stroke-width="1.3"/>
<path d="M146.4 542L150.4 545" stroke="#595959" stroke-width="1.8" fill="none"/>
<!-- sort indicator -->
<path d="M240 555H249.2L244.6 560Z" fill="#808080"/>
</svg>


<div id="texts">
<span class="t" style="left:23.00px;top:5.84px;font-size:12px;font-weight:400;color:#000;letter-spacing:-0.288px;">Qlik Sense Desktop</span>
<span class="t" style="left:22.00px;top:31.27px;font-size:11.5px;font-weight:400;color:#000;letter-spacing:-0.499px;">Qlik Sense Desktop hub</span>
<span class="t" style="left:177.90px;top:30.27px;font-size:11.5px;font-weight:400;color:#000;letter-spacing:-0.179px;">customer profit...</span>
<span class="t" style="left:122.50px;top:62.00px;font-size:13px;font-weight:700;color:#a3a3a3;letter-spacing:-0.458px;">Save</span>
<span class="t" style="left:169.20px;top:62.00px;font-size:13px;font-weight:700;color:#595959;letter-spacing:-0.134px;">customer profitability</span>
<span class="t" style="left:1189.00px;top:62.00px;font-size:13px;font-weight:700;color:#595959;letter-spacing:-0.254px;">Edit</span>
<span class="t" style="left:1247.30px;top:62.00px;font-size:13px;font-weight:700;color:#595959;letter-spacing:-0.228px;">Product and Territory</span>
<span class="t" style="left:143.30px;top:101.30px;font-size:15px;font-weight:400;color:#d0d0d0;letter-spacing:-0.120px;">No selections applied</span>
<span class="t" style="left:15.70px;top:140.20px;font-size:21.5px;font-weight:400;color:#b0b0b0;letter-spacing:0.356px;">Product and Territory</span>
<span class="t" style="left:32.90px;top:188.00px;font-size:13px;font-weight:700;color:#595959;letter-spacing:-0.095px;">Year</span>
<span class="t" style="left:301.40px;top:187.70px;font-size:13px;font-weight:700;color:#595959;letter-spacing:-0.552px;">Region</span>
<span class="t" style="left:569.70px;top:187.70px;font-size:13px;font-weight:700;color:#595959;letter-spacing:0.351px;">State</span>
<span class="t" style="left:207.20px;top:228.95px;font-size:11.4px;font-weight:400;color:#595959;font-family:'DejaVu Sans Mono', 'Liberation Mono', monospace;letter-spacing:0.254px;">2013</span>
<span class="t" style="left:207.20px;top:258.95px;font-size:11.4px;font-weight:400;color:#595959;font-family:'DejaVu Sans Mono', 'Liberation Mono', monospace;letter-spacing:0.254px;">2014</span>
<span class="t" style="left:285.10px;top:227.74px;font-size:12px;font-weight:400;color:#595959;letter-spacing:-0.719px;">CENTRAL</span>
<span class="t" style="left:285.10px;top:257.74px;font-size:12px;font-weight:400;color:#595959;letter-spacing:-0.981px;">EAST</span>
<span class="t" style="left:285.10px;top:287.74px;font-size:12px;font-weight:400;color:#595959;letter-spacing:-0.413px;">NORTH</span>
<span class="t" style="left:285.10px;top:317.74px;font-size:12px;font-weight:400;color:#595959;letter-spacing:-0.525px;">SOUTH</span>
<span class="t" style="left:285.10px;top:347.74px;font-size:12px;font-weight:400;color:#595959;letter-spacing:-0.891px;">WEST</span>
<span class="t" style="left:553.50px;top:227.84px;font-size:12px;font-weight:400;color:#595959;letter-spacing:-0.401px;">ALASKA</span>
<span class="t" style="left:553.50px;top:257.84px;font-size:12px;font-weight:400;color:#595959;letter-spacing:-0.191px;">ARIZONA</span>
<span class="t" style="left:553.50px;top:287.84px;font-size:12px;font-weight:400;color:#595959;letter-spacing:-0.191px;">CALIFORNIA</span>
<span class="t" style="left:553.50px;top:317.84px;font-size:12px;font-weight:400;color:#595959;letter-spacing:-0.203px;">FLORIDA</span>
<span class="t" style="left:553.50px;top:347.84px;font-size:12px;font-weight:400;color:#595959;letter-spacing:0.234px;">ILLINOIS</span>
<span class="t" style="left:553.50px;top:377.84px;font-size:12px;font-weight:400;color:#595959;letter-spacing:0.135px;">INDIANA</span>
<span class="t" style="left:553.50px;top:407.84px;font-size:12px;font-weight:400;color:#595959;letter-spacing:-0.438px;">KANSAS</span>
<span class="t" style="left:553.50px;top:437.84px;font-size:12px;font-weight:400;color:#595959;letter-spacing:-0.438px;">MARYLAND</span>
<span class="t" style="left:553.50px;top:467.84px;font-size:12px;font-weight:400;color:#595959;letter-spacing:-0.616px;">MASSACHUSETTS</span>
<span class="t" style="left:553.50px;top:497.84px;font-size:12px;font-weight:400;color:#595959;letter-spacing:-0.157px;">MINNESOTA</span>
<span class="t" style="left:24.60px;top:531.20px;font-size:15px;font-weight:400;color:#7b7b7b;letter-spacing:0.399px;">Product</span>
<span class="t" style="left:263.70px;top:531.20px;font-size:15px;font-weight:400;color:#7b7b7b;letter-spacing:-0.374px;">Revenue</span>
<span class="t" style="left:436.00px;top:531.88px;font-size:14.2px;font-weight:400;color:#7b7b7b;font-family:'DejaVu Sans Mono', 'Liberation Mono', monospace;">%</span>
<span class="t" style="left:22.80px;top:562.04px;font-size:12px;font-weight:700;color:#404040;letter-spacing:0.569px;">Totals</span>
<span class="t" style="left:224.60px;top:562.55px;font-size:11.4px;font-weight:700;color:#404040;font-family:'DejaVu Sans Mono', 'Liberation Mono', monospace;letter-spacing:0.145px;">$61,763,687.16</span>
<span class="t" style="left:403.00px;top:562.55px;font-size:11.4px;font-weight:700;color:#404040;font-family:'DejaVu Sans Mono', 'Liberation Mono', monospace;letter-spacing:0.429px;">87.03%</span>
<span class="t" style="left:22.80px;top:590.24px;font-size:12px;font-weight:400;color:#595959;letter-spacing:0.731px;">Primus</span>
<span class="t" style="left:227.10px;top:590.75px;font-size:11.4px;font-weight:400;color:#595959;font-family:'DejaVu Sans Mono', 'Liberation Mono', monospace;letter-spacing:-0.047px;">$34,578,821.63</span>
<span class="t" style="left:404.00px;top:590.75px;font-size:11.4px;font-weight:400;color:#595959;font-family:'DejaVu Sans Mono', 'Liberation Mono', monospace;letter-spacing:0.229px;">48.72%</span>
<span class="t" style="left:22.80px;top:619.24px;font-size:12px;font-weight:400;color:#595959;letter-spacing:0.335px;">Gladius</span>
<span class="t" style="left:227.10px;top:619.75px;font-size:11.4px;font-weight:400;color:#595959;font-family:'DejaVu Sans Mono', 'Liberation Mono', monospace;letter-spacing:-0.047px;">$16,165,118.45</span>
<span class="t" style="left:404.00px;top:619.75px;font-size:11.4px;font-weight:400;color:#595959;font-family:'DejaVu Sans Mono', 'Liberation Mono', monospace;letter-spacing:0.229px;">22.78%</span>
<span class="t" style="left:22.80px;top:648.24px;font-size:12px;font-weight:400;color:#595959;letter-spacing:0.668px;">Doroga</span>
<span class="t" style="left:234.50px;top:648.75px;font-size:11.4px;font-weight:400;color:#595959;font-family:'DejaVu Sans Mono', 'Liberation Mono', monospace;letter-spacing:-0.096px;">$5,508,644.60</span>
<span class="t" style="left:411.70px;top:648.75px;font-size:11.4px;font-weight:400;color:#595959;font-family:'DejaVu Sans Mono', 'Liberation Mono', monospace;letter-spacing:0.076px;">7.76%</span>
<span class="t" style="left:22.80px;top:677.24px;font-size:12px;font-weight:400;color:#595959;letter-spacing:0.447px;">Sova</span>
<span class="t" style="left:234.50px;top:677.75px;font-size:11.4px;font-weight:400;color:#595959;font-family:'DejaVu Sans Mono', 'Liberation Mono', monospace;letter-spacing:-0.096px;">$5,120,922.80</span>
<span class="t" style="left:411.70px;top:677.75px;font-size:11.4px;font-weight:400;color:#595959;font-family:'DejaVu Sans Mono', 'Liberation Mono', monospace;letter-spacing:0.076px;">7.22%</span>
<span class="t" style="left:22.80px;top:706.24px;font-size:12px;font-weight:400;color:#595959;letter-spacing:1.128px;">MI-72</span>
<span class="t" style="left:245.50px;top:706.75px;font-size:11.4px;font-weight:400;color:#595959;font-family:'DejaVu Sans Mono', 'Liberation Mono', monospace;letter-spacing:0.156px;">$311,879.67</span>
<span class="t" style="left:411.70px;top:706.75px;font-size:11.4px;font-weight:400;color:#595959;font-family:'DejaVu Sans Mono', 'Liberation Mono', monospace;letter-spacing:0.076px;">0.44%</span>
<span class="t" style="left:22.80px;top:735.24px;font-size:12px;font-weight:400;color:#595959;letter-spacing:0.534px;">Gunner</span>
<span class="t" style="left:253.10px;top:735.75px;font-size:11.4px;font-weight:400;color:#595959;font-family:'DejaVu Sans Mono', 'Liberation Mono', monospace;letter-spacing:0.091px;">$78,300.00</span>
<span class="t" style="left:411.70px;top:735.75px;font-size:11.4px;font-weight:400;color:#595959;font-family:'DejaVu Sans Mono', 'Liberation Mono', monospace;letter-spacing:0.076px;">0.11%</span>
<span class="t" style="left:805.10px;top:184.13px;font-size:14.5px;font-weight:700;color:#7b7b7b;letter-spacing:-0.055px;">Sales $ by State</span>
<span class="t" style="left:805.10px;top:522.83px;font-size:14.5px;font-weight:700;color:#7b7b7b;letter-spacing:-0.217px;">Sales $ by Product Group (sorted by Budget Amt)</span>
<span class="t" style="left:847.00px;top:567.34px;font-size:12px;font-weight:400;color:#666;letter-spacing:0.131px;">Primus</span>
<span class="t" style="left:1536.00px;top:568.67px;font-size:11.5px;font-weight:400;color:#666;letter-spacing:0.088px;">34.58M</span>
<span class="t" style="left:845.20px;top:607.19px;font-size:12px;font-weight:400;color:#666;letter-spacing:-0.148px;">Gladius</span>
<span class="t" style="left:1214.50px;top:608.52px;font-size:11.5px;font-weight:400;color:#666;letter-spacing:0.128px;">16.17M</span>
<span class="t" style="left:845.20px;top:647.04px;font-size:12px;font-weight:400;color:#666;letter-spacing:0.088px;">Doroga</span>
<span class="t" style="left:1002.10px;top:648.37px;font-size:11.5px;font-weight:400;color:#666;letter-spacing:-0.042px;">5.51M</span>
<span class="t" style="left:858.00px;top:686.89px;font-size:12px;font-weight:400;color:#666;letter-spacing:-0.120px;">Sova</span>
<span class="t" style="left:994.00px;top:688.22px;font-size:11.5px;font-weight:400;color:#666;letter-spacing:0.133px;">5.12M</span>
<span class="t" style="left:851.50px;top:726.74px;font-size:12px;font-weight:400;color:#666;letter-spacing:0.703px;">MI-72</span>
<span class="t" style="left:898.00px;top:728.07px;font-size:11.5px;font-weight:400;color:#666;letter-spacing:0.320px;">311.88k</span>
<span class="t" style="left:845.00px;top:766.59px;font-size:12px;font-weight:400;color:#666;letter-spacing:-0.006px;">Gunner</span>
<span class="t" style="left:893.00px;top:767.92px;font-size:11.5px;font-weight:400;color:#666;letter-spacing:0.215px;">78.3k</span>
<span class="t" style="left:1295.00px;top:777.07px;font-size:20px;font-weight:400;color:#c6c6c6;letter-spacing:-0.043px;">Activate Windows</span>
<span class="t" style="left:1295.00px;top:802.20px;font-size:15px;font-weight:400;color:#c6c6c6;letter-spacing:-0.017px;">Go to Settings to activate Windows.</span>
</div>
</body></html>
